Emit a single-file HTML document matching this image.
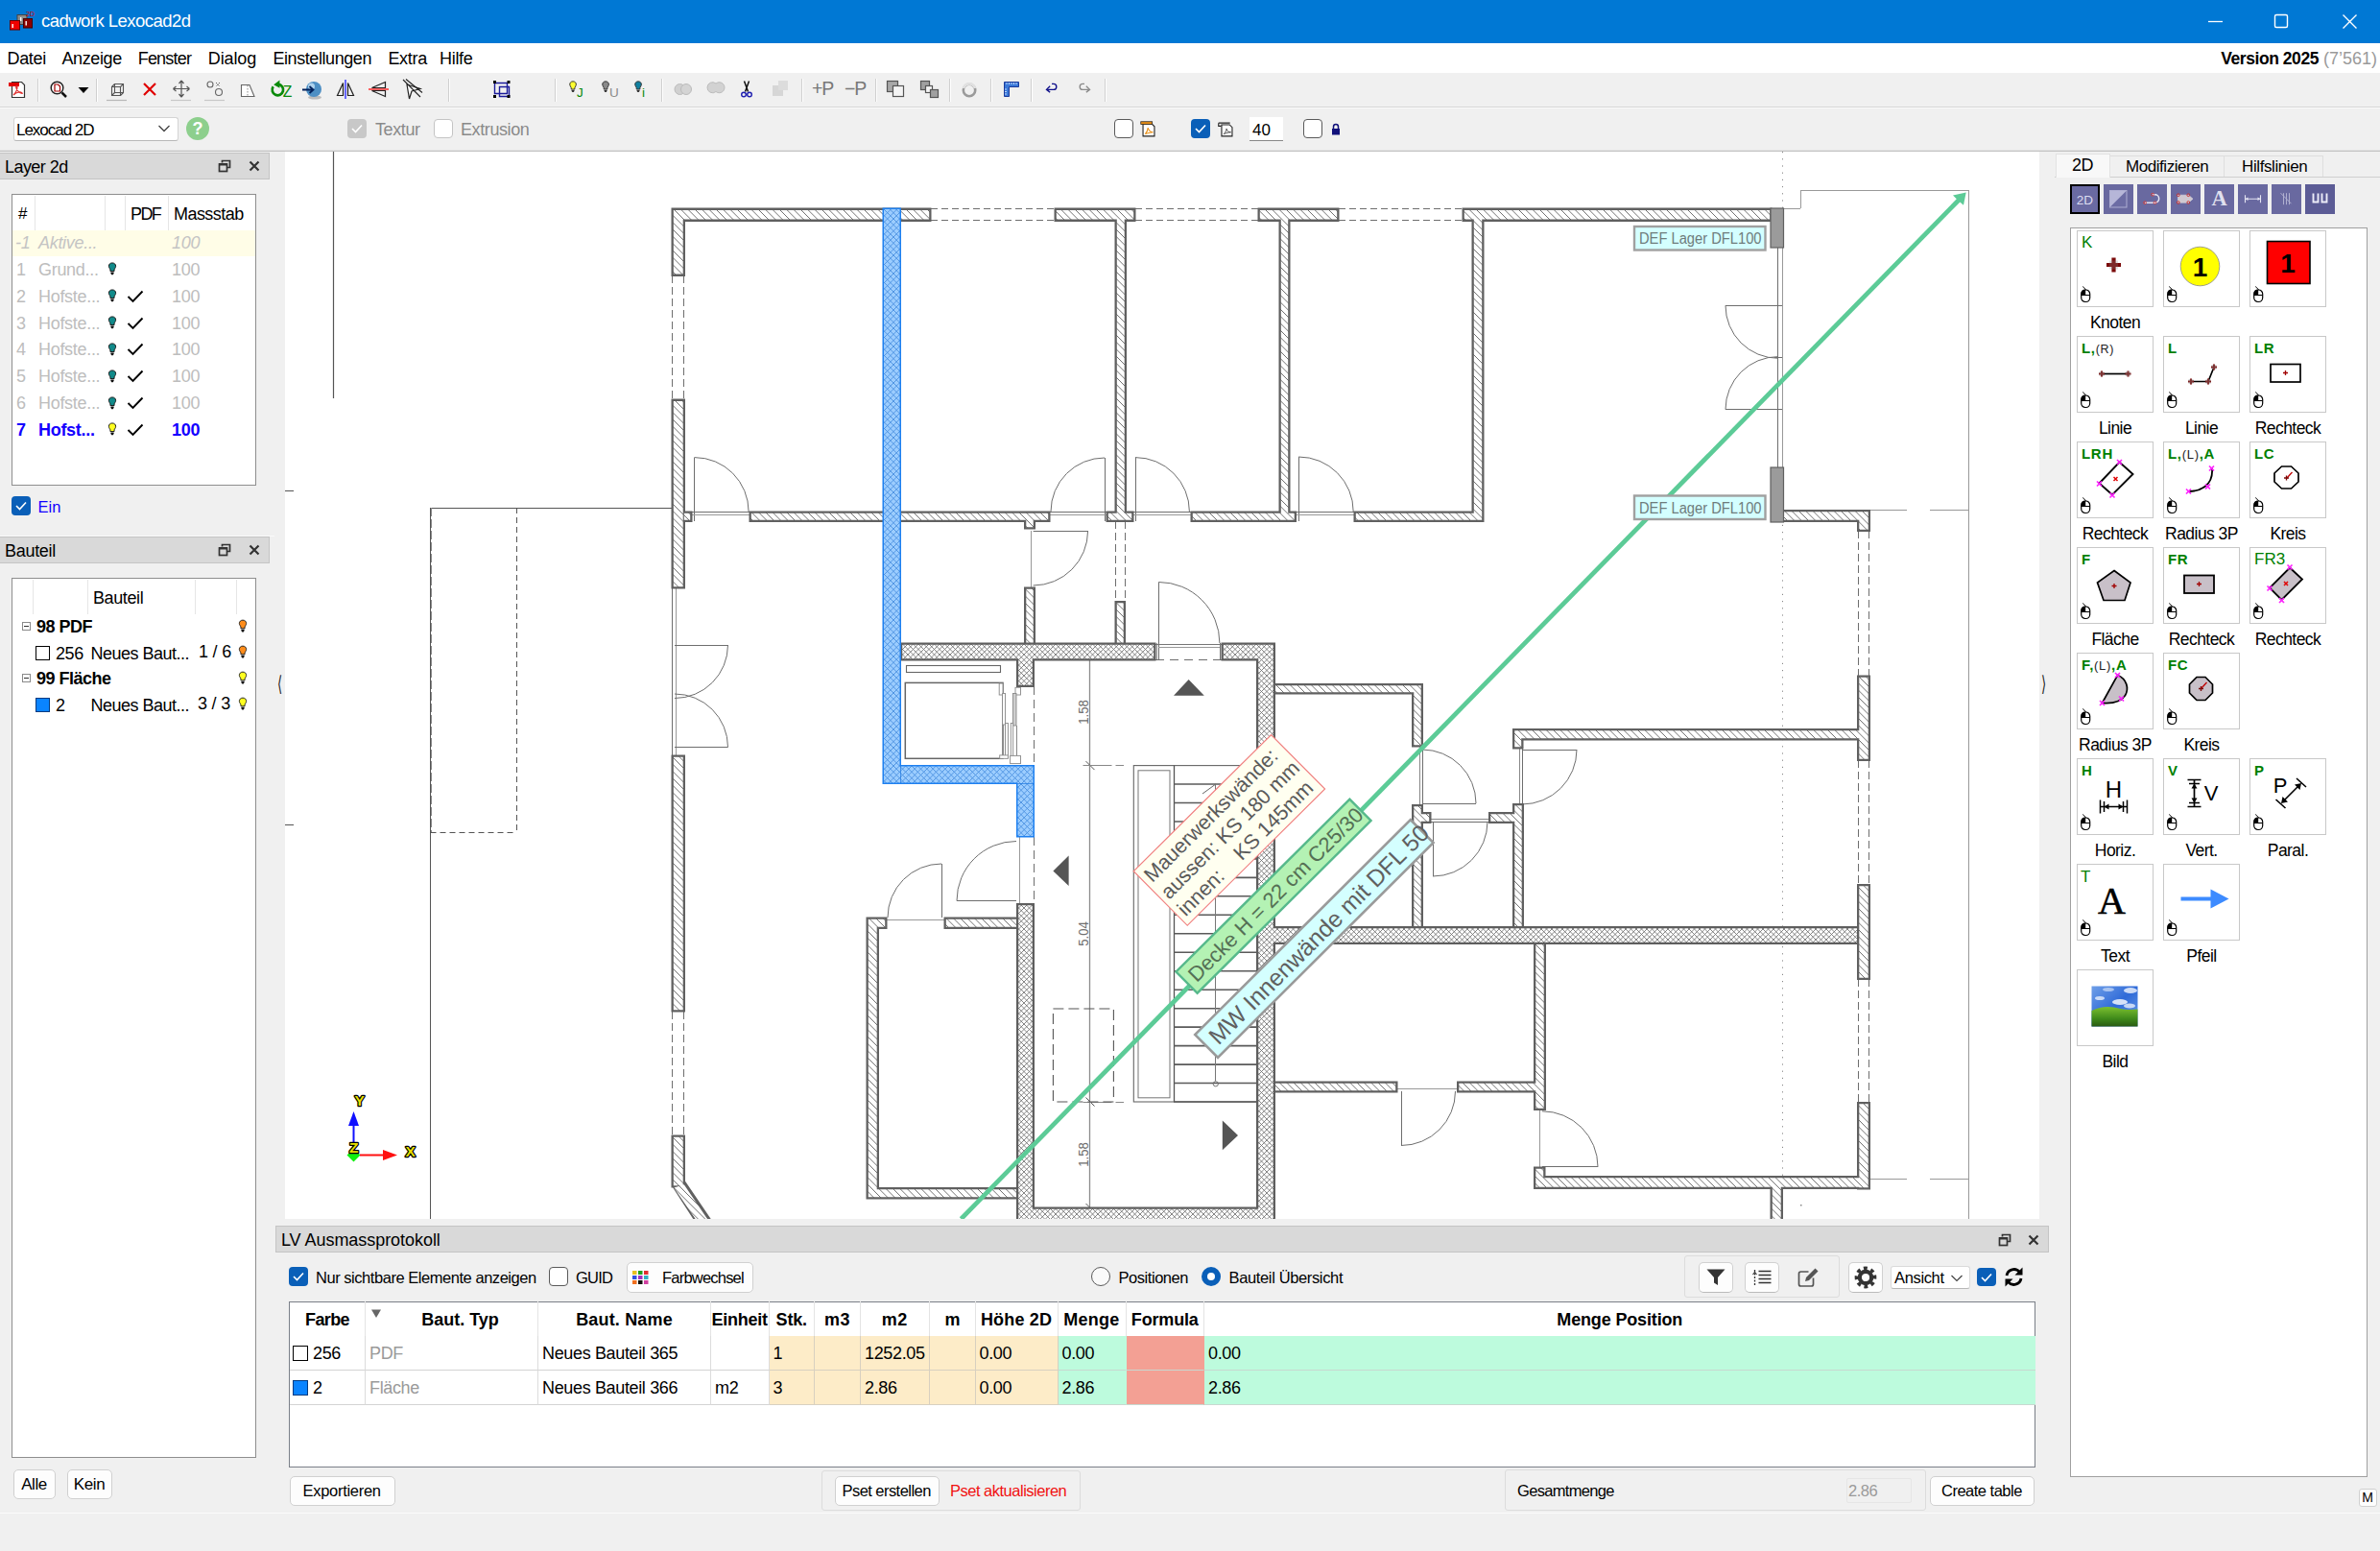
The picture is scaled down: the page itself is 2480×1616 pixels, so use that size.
<!DOCTYPE html>
<html lang="de">
<head>
<meta charset="utf-8">
<title>cadwork Lexocad2d</title>
<style>
*{box-sizing:border-box;margin:0;padding:0}
html,body{width:2480px;height:1616px;overflow:hidden;background:#f0f0f0}
body{font-family:"Liberation Sans",sans-serif;font-size:17.5px;color:#000;position:relative}
.abs{position:absolute}
.t{position:absolute;white-space:nowrap;line-height:1}
svg{position:absolute;overflow:visible}
#titlebar{left:0;top:0;width:2480px;height:45px;background:#0078d4}
#menubar{left:0;top:45px;width:2480px;height:31px;background:#fff}
.menu{position:absolute;top:51px;font-size:18px;line-height:20px;white-space:nowrap}
.tsep{position:absolute;top:82px;width:1px;height:24px;background:#d0d0d0;border-right:1px solid #fff;box-sizing:content-box}
.hline{position:absolute;left:0;width:2480px;height:1px}
.dock{position:absolute;background:#d9d9d9;border:1px solid #c4c4c4;height:27px}
.dock .t{top:5px;font-size:18px}
.box{position:absolute;background:#fff;border:1px solid #8e8e8e}
.cb{position:absolute;width:20px;height:20px;border-radius:4px}
.cb.on{background:#0a5fb8}
.cb.off{background:#fff;border:1px solid #5a5a5a}
.cb.dis{background:#c8c8c8}
.btn{position:absolute;background:#fdfdfd;border:1px solid #d0d0d0;border-radius:5px;text-align:center;white-space:nowrap}
.grp{position:absolute;border:1px solid #dcdcdc;border-radius:3px;background:#f0f0f0}
.lrow{position:absolute;left:13px;width:253px;height:26.500px}
.lrow .t{top:4px;font-size:18px}
.g{color:#bdbdbd}
.tile{position:absolute;width:80px;height:80px;border:1px solid #c8c8c8;background:#fff}
.tlab{position:absolute;width:110px;text-align:center;font-size:17.5px;line-height:20px;white-space:nowrap}
.key{position:absolute;font-weight:bold;color:#008000;font-size:15px;line-height:1;white-space:nowrap;font-family:"Liberation Sans",sans-serif}
.th{position:absolute;top:1356px;height:36px;font-weight:bold;font-size:18px;line-height:38px;text-align:center;white-space:nowrap;border-right:1px solid #e4e4e4}
.td{position:absolute;height:36px;font-size:18px;line-height:37px;white-space:nowrap;border-right:1px solid #dcdcdc;border-bottom:1px solid #d4d4d4;padding-left:4px}
</style>
</head>
<body>
<div id="titlebar" class="abs"></div>
<svg style="left:10px;top:11px" width="26" height="22" viewBox="0 0 26 22">
<rect x="8" y="4.5" width="10" height="10" fill="#8c8c8c" stroke="#444" stroke-width="1"/>
<rect x="14.5" y="8.5" width="9" height="9.5" fill="#8b0000" stroke="#400" stroke-width="1"/>
<rect x="0.5" y="10.5" width="10" height="9.5" fill="#f00000" stroke="#600" stroke-width="1"/>
<rect x="2.5" y="14" width="1.4" height="4" fill="#fff"/><rect x="11" y="7" width="1.4" height="4" fill="#fff"/><rect x="16.5" y="11" width="1.4" height="4.5" fill="#fff"/>
<text x="17" y="5.5" font-size="7" font-family="Liberation Sans, sans-serif" fill="#d00000">2D</text></svg>
<div class="t" style="left:43px;top:13px;font-size:18.500px;color:#fff;letter-spacing:-0.53px">cadwork Lexocad2d</div>
<svg style="left:2290px;top:8px" width="180" height="30" viewBox="2290 8 180 30">
<path d="M2301 22.5H2316" stroke="#fff" stroke-width="1.3" fill="none"/>
<rect x="2370.5" y="15.5" width="13" height="13" rx="1.5" fill="none" stroke="#fff" stroke-width="1.4"/>
<path d="M2441.5 15.5L2455.5 29.5M2455.5 15.5L2441.5 29.5" stroke="#fff" stroke-width="1.4" fill="none"/></svg>
<div id="menubar" class="abs"></div>
<div class="menu" style="left:7.5px;letter-spacing:-0.33px">Datei</div>
<div class="menu" style="left:64.4px;letter-spacing:-0.36px">Anzeige</div>
<div class="menu" style="left:143.7px;letter-spacing:-0.79px">Fenster</div>
<div class="menu" style="left:216.8px;letter-spacing:-0.13px">Dialog</div>
<div class="menu" style="left:284.4px;letter-spacing:-0.42px">Einstellungen</div>
<div class="menu" style="left:404.4px;letter-spacing:-0.3px">Extra</div>
<div class="menu" style="left:458px;letter-spacing:-0.3px">Hilfe</div>
<div class="t" style="right:3px;top:51px;font-size:18px;line-height:20px"><b style="font-size:17.5px;letter-spacing:-0.45px">Version 2025</b> <span style="color:#9a9a9a">(7’561)</span></div>
<div class="hline" style="top:111px;background:#d6d6d6"></div><div class="hline" style="top:112px;background:#fbfbfb"></div>
<div class="hline" style="top:156px;background:#e2e2e2"></div><div class="hline" style="top:157px;background:#c2c2c2"></div>
<div class="tsep" style="left:39px"></div>
<div class="tsep" style="left:100px"></div>
<div class="tsep" style="left:467px"></div>
<div class="tsep" style="left:578px"></div>
<div class="tsep" style="left:689px"></div>
<div class="tsep" style="left:835px"></div>
<div class="tsep" style="left:912px"></div>
<div class="tsep" style="left:989px"></div>
<div class="tsep" style="left:1032px"></div>
<div class="tsep" style="left:1074px"></div>
<div class="tsep" style="left:1151px"></div>
<svg style="left:7.0px;top:81.0px" width="24" height="24" viewBox="0 0 24 24"><path d="M5.5 4.5h10l3 3v13h-13z" fill="#fff" stroke="#333" stroke-width="1.2"/><rect x="2" y="5" width="11" height="4" fill="#e00000"/><path d="M7 18c2-2 4-6 4-8.5 0-1.2-1.5-1-1.300 0.300 0.500 3 3.500 6.500 6.300 6.700 1 0-0.500-1.800-3-1.500-2 0.200-4.500 1.200-6 3z" fill="none" stroke="#e03030" stroke-width="1.2"/></svg>
<svg style="left:49.0px;top:81.0px" width="24" height="24" viewBox="0 0 24 24"><circle cx="10.5" cy="10.5" r="6.3" fill="#fff" stroke="#222" stroke-width="1.5"/><path d="M15.500 15.500L20 20" stroke="#111" stroke-width="2.5"/><path d="M8 7h3.500l2 2v5H8z" fill="#fff" stroke="#a00000" stroke-width="1.2"/></svg>
<svg style="left:74.5px;top:81.0px" width="24" height="24" viewBox="0 0 24 24"><path d="M6.500 10h11L12 16z" fill="#000"/></svg>
<svg style="left:109.5px;top:81.0px" width="24" height="24" viewBox="0 0 24 24"><path d="M6.500 9.500h9v9h-9zM9.500 6.500h9v9h-9zM6.500 9.500l3-3M15.500 9.500l3-3M15.500 18.500l3-3M6.500 18.500l3-3" fill="none" stroke="#555" stroke-width="1.1"/><path d="M1 23.500h21" stroke="#b8b8b8" stroke-width="1.2"/></svg>
<svg style="left:143.5px;top:81.0px" width="24" height="24" viewBox="0 0 24 24"><path d="M6 6L18 18M18 6L6 18" stroke="#e00000" stroke-width="2.2" fill="none"/></svg>
<svg style="left:177.0px;top:81.0px" width="24" height="24" viewBox="0 0 24 24"><path d="M12 3v17M3.500 11.500h17M12 3l-2.500 3M12 3l2.500 3M12 20l-2.500-3M12 20l2.500-3M3.500 11.500l3-2.500M3.500 11.500l3 2.500M20.500 11.500l-3-2.500M20.500 11.500l-3 2.500" stroke="#555" stroke-width="1.2" fill="none"/><path d="M1 23.500h21" stroke="#c8c8c8" stroke-width="1.2"/></svg>
<svg style="left:212.0px;top:81.0px" width="24" height="24" viewBox="0 0 24 24"><circle cx="7" cy="7" r="3" fill="none" stroke="#666" stroke-width="1.1"/><circle cx="16" cy="15" r="3.500" fill="none" stroke="#666" stroke-width="1.1"/><path d="M13 5l4 4M17 5l-4 4" stroke="#666" stroke-width="1" stroke-dasharray="1.500 1"/><path d="M1 23.500h21" stroke="#c8c8c8" stroke-width="1.2"/></svg>
<svg style="left:246.0px;top:81.0px" width="24" height="24" viewBox="0 0 24 24"><path d="M5.500 7.500h8.500l5 12h-13.500z" fill="#fff" stroke="#666" stroke-width="1.1"/><path d="M12 8v11" stroke="#888" stroke-width="1" stroke-dasharray="1.500 1.500"/></svg>
<svg style="left:278.5px;top:80.0px" width="26" height="26" viewBox="0 0 24 24"><path d="M5.200 9.500A5.300 5.300 0 1 0 10 7.200" fill="none" stroke="#0a8a0a" stroke-width="2.500"/><path d="M11.500 3.200v7.600l-5.800-3.200z" fill="#0a8a0a"/><text x="14.500" y="19" font-size="14.500" font-family="Liberation Sans, sans-serif" fill="#0a8a0a">Z</text></svg>
<svg style="left:313.5px;top:81.0px" width="24" height="24" viewBox="0 0 24 24"><ellipse cx="14" cy="20.500" rx="7" ry="2" fill="#999" opacity="0.600"/><circle cx="13" cy="12" r="8" fill="#4d8fc4"/><circle cx="10.500" cy="9" r="3.500" fill="#b9d9f2" opacity="0.900"/><path d="M1 12.500h11M8.500 9l4 3.500-4 3.500" stroke="#00205a" stroke-width="1.800" fill="none"/></svg>
<svg style="left:347.5px;top:81.0px" width="24" height="24" viewBox="0 0 24 24"><path d="M9.500 5.500v13h-6zM14.500 5.500v13h6z" fill="none" stroke="#222" stroke-width="1.2"/><path d="M12 2v20" stroke="#2020ff" stroke-width="1.3"/></svg>
<svg style="left:382.0px;top:81.0px" width="24" height="24" viewBox="0 0 24 24"><path d="M19.500 4.500l-14 6h14zM19.500 19.500l-14-6h14z" fill="none" stroke="#222" stroke-width="1.2"/><path d="M2 12h21" stroke="#ff2020" stroke-width="1.4"/></svg>
<svg style="left:416.5px;top:81.0px" width="24" height="24" viewBox="0 0 24 24"><path d="M7 7l14 4.500-9 2.500-2.500 8z" fill="#fff" stroke="#222" stroke-width="1.2"/><path d="M3 2l18 18M6 1.500l17 14" stroke="#222" stroke-width="1.1"/></svg>
<svg style="left:510.5px;top:81.0px" width="24" height="24" viewBox="0 0 24 24"><path d="M4.500 5.500h13v11h-13zM9.500 9.500h10v10h-10z" fill="none" stroke="#1a1a9a" stroke-width="1.4"/><rect x="3" y="3" width="3" height="3" fill="#000"/><rect x="17.500" y="3" width="3" height="3" fill="#000"/><rect x="3" y="18" width="3" height="3" fill="#000"/><rect x="17.500" y="18" width="3" height="3" fill="#000"/></svg>
<svg style="left:587.5px;top:80.0px" width="24" height="24" viewBox="0 0 24 24"><g transform="translate(3.500,3) scale(0.74)"><path d="M7.500 2.500c-3 0-4.500 2.200-4.500 4.300 0 2 1.500 3 2 4.500v2.200h5v-2.200c0.500-1.500 2-2.500 2-4.500 0-2.100-1.500-4.300-4.500-4.300z" fill="#ffff30" stroke="#333" stroke-width="1.300"/><path d="M5.500 14.500h4v1.500l-1 1.500h-2l-1-1.500z" fill="#333"/></g><text x="13" y="20.500" font-size="13.500" font-family="Liberation Sans, sans-serif" fill="#0a8a0a">J</text></svg>
<svg style="left:621.5px;top:80.0px" width="24" height="24" viewBox="0 0 24 24"><g transform="translate(3.500,3) scale(0.74)"><path d="M7.500 2.500c-3 0-4.500 2.200-4.500 4.300 0 2 1.500 3 2 4.500v2.200h5v-2.200c0.500-1.500 2-2.500 2-4.500 0-2.100-1.500-4.300-4.500-4.300z" fill="#8a8a8a" stroke="#333" stroke-width="1.300"/><path d="M5.500 14.500h4v1.500l-1 1.500h-2l-1-1.500z" fill="#333"/></g><text x="13" y="20.500" font-size="13.500" font-family="Liberation Sans, sans-serif" fill="#8a8a8a">U</text></svg>
<svg style="left:655.5px;top:80.0px" width="24" height="24" viewBox="0 0 24 24"><g transform="translate(3.500,3) scale(0.74)"><path d="M7.500 2.500c-3 0-4.500 2.200-4.500 4.300 0 2 1.500 3 2 4.500v2.200h5v-2.200c0.500-1.500 2-2.500 2-4.500 0-2.100-1.500-4.300-4.500-4.300z" fill="#1080a0" stroke="#333" stroke-width="1.300"/><path d="M5.500 14.500h4v1.500l-1 1.500h-2l-1-1.500z" fill="#333"/></g><text x="13" y="20.500" font-size="13.500" font-family="Liberation Sans, sans-serif" fill="#0a8a0a">i</text></svg>
<svg style="left:699.5px;top:81.0px" width="24" height="24" viewBox="0 0 24 24"><circle cx="8.500" cy="12" r="5.500" fill="#d0d0d0" stroke="#bbb"/><circle cx="15" cy="12" r="5.500" fill="#d4d4d4" stroke="#bbb"/></svg>
<svg style="left:733.5px;top:81.0px" width="24" height="24" viewBox="0 0 24 24"><path d="M3 10a5.500 5.500 0 0 1 9-4 5.500 5.500 0 1 1 0 8.500A5.500 5.500 0 0 1 3 10z" fill="#d2d2d2" stroke="#bcbcbc"/></svg>
<svg style="left:766.0px;top:81.0px" width="24" height="24" viewBox="0 0 24 24"><path d="M9.500 3.500l4 11M14.500 3.500l-4 11" stroke="#111" stroke-width="1.5"/><circle cx="9" cy="17.500" r="2.300" fill="none" stroke="#2020b0" stroke-width="1.400"/><circle cx="15" cy="17.500" r="2.300" fill="none" stroke="#2020b0" stroke-width="1.400"/></svg>
<svg style="left:801.0px;top:81.0px" width="24" height="24" viewBox="0 0 24 24"><rect x="4" y="8" width="11" height="11" fill="#d6d6d6"/><rect x="10" y="3" width="10" height="10" fill="#dcdcdc"/></svg>
<div class="t" style="left:846px;top:83px;font-size:19.500px;color:#787878;letter-spacing:-1.2px">+P</div>
<div class="t" style="left:880px;top:83px;font-size:19.500px;color:#787878;letter-spacing:-1.2px">−P</div>
<svg style="left:921.0px;top:81.0px" width="24" height="24" viewBox="0 0 24 24"><rect x="3.500" y="3.500" width="11" height="11" fill="#a8a8a8" stroke="#555" stroke-width="1.2"/><rect x="9.500" y="8.500" width="11" height="11" fill="#f4f4f4" stroke="#555" stroke-width="1.2"/></svg>
<svg style="left:955.5px;top:81.0px" width="24" height="24" viewBox="0 0 24 24"><rect x="3.500" y="3.500" width="9" height="9" fill="#a0a0a0" stroke="#555" stroke-width="1.2"/><rect x="8.500" y="8.500" width="7" height="7" fill="#f4f4f4" stroke="#555" stroke-width="1.2"/><rect x="13.500" y="12.500" width="8" height="8" fill="#a0a0a0" stroke="#555" stroke-width="1.2"/></svg>
<svg style="left:998.0px;top:81.0px" width="24" height="24" viewBox="0 0 24 24"><circle cx="12" cy="13" r="6.200" fill="none" stroke="#9a9a9a" stroke-width="2.600"/><path d="M6 11a6.200 6.200 0 0 1 12 0" fill="none" stroke="#e0e0e0" stroke-width="2.800"/></svg>
<svg style="left:1042.0px;top:81.0px" width="24" height="24" viewBox="0 0 24 24"><path d="M4.500 4.500h15v5h-10v10h-5z" fill="#3a78d8" stroke="#1a3a9a" stroke-width="1"/><path d="M7 5v2M9.500 5v2M12 5v2M14.500 5v2M17 5v2M5 12h2M5 14.500h2M5 17h2" stroke="#cfe0ff" stroke-width="0.900"/></svg>
<svg style="left:1085.0px;top:81.0px" width="22" height="22" viewBox="0 0 24 24"><path d="M7 12.500h7a3.200 3.200 0 0 0 0-6.500h-2" fill="none" stroke="#10108a" stroke-width="1.500" transform="translate(0,1) scale(1,1)"/><path d="M10 9.500l-4 4 4 3" fill="none" stroke="#10108a" stroke-width="1.500" transform="translate(0,0)"/></svg>
<svg style="left:1119.0px;top:81.0px" width="22" height="22" viewBox="0 0 24 24"><path d="M17 12.500h-7a3.200 3.200 0 0 1 0-6.500h2" fill="none" stroke="#8a8a8a" stroke-width="1.500" transform="translate(0,1)"/><path d="M14 9.500l4 4-4 3" fill="none" stroke="#8a8a8a" stroke-width="1.500"/></svg>
<div class="abs" style="left:14px;top:122px;width:172px;height:25px;background:#fff;border:1px solid #d4d4d4;border-radius:3px;border-bottom-color:#b8b8b8"></div>
<div class="t" style="left:17px;top:126px;font-size:17px;line-height:20px;letter-spacing:-1.03px">Lexocad 2D</div>
<svg style="left:164px;top:129px" width="14" height="10" viewBox="0 0 14 10"><path d="M1.500 2l5.500 5.500L12.500 2" fill="none" stroke="#444" stroke-width="1.300"/></svg>
<div class="abs" style="left:194px;top:122px;width:24px;height:24px;border-radius:12px;background:#8dcf8d"></div><div class="t" style="left:200.500px;top:125px;font-size:18px;font-weight:bold;color:#fff">?</div>
<div class="cb dis" style="left:362px;top:124px"><svg style="left:4px;top:5px" width="12" height="10" viewBox="0 0 12 10"><path d="M1 5l3.500 3.500L11 1.500" fill="none" stroke="#fff" stroke-width="1.600"/></svg></div><div class="t" style="left:391px;top:126px;font-size:18px;color:#8a8a8a;letter-spacing:-0.4px">Textur</div>
<div class="cb off" style="left:452px;top:124px;border-color:#c4c4c4"></div><div class="t" style="left:480px;top:126px;font-size:18px;color:#8a8a8a;letter-spacing:-0.4px">Extrusion</div>
<div class="cb off" style="left:1160.500px;top:124px"></div>
<svg style="left:1186.0px;top:124.0px" width="22" height="22" viewBox="0 0 24 24"><path d="M5.500 5.500h10l3 3v11h-13z" fill="#fff" stroke="#222" stroke-width="1.200"/><rect x="3" y="3" width="13" height="3" fill="#e89018" stroke="#222" stroke-width="0.800"/><path d="M8 17c2-2 3-5 3-7 1 3 3 5 6 5-3 0-6 1-9 2z" fill="none" stroke="#e89018" stroke-width="1.200"/></svg>
<div class="cb on" style="left:1241px;top:124px"><svg style="left:4px;top:5px" width="12" height="10" viewBox="0 0 12 10"><path d="M1 5l3.500 3.500L11 1.500" fill="none" stroke="#fff" stroke-width="1.600"/></svg></div>
<svg style="left:1266.5px;top:124.0px" width="22" height="22" viewBox="0 0 24 24"><path d="M6.500 6.500h9l3 3v10h-12z" fill="#fff" stroke="#222" stroke-width="1.200"/><path d="M3 4.500h13M3 4.500v3.500h3" fill="none" stroke="#222" stroke-width="1.200"/><path d="M9 17c2-2 3-4 3-6 1 3 2 4 5 4-3 0-5 1-8 2z" fill="none" stroke="#444" stroke-width="1"/></svg>
<div class="abs" style="left:1302px;top:122px;width:35px;height:25px;background:#fff;border-bottom:1px solid #888"></div><div class="t" style="left:1305px;top:127px;font-size:17px">40</div>
<div class="cb off" style="left:1358px;top:124px"></div>
<svg style="left:1386px;top:128px" width="12" height="14" viewBox="0 0 12 14"><path d="M3.500 6v-2a2.500 2.500 0 0 1 5 0v2" fill="none" stroke="#10107a" stroke-width="1.500"/><rect x="2" y="6" width="8" height="6.500" fill="#10107a"/></svg>
<div class="dock" style="left:-1px;top:159px;width:282px;height:28px"><div class="t" style="left:5px;letter-spacing:-0.55px">Layer 2d</div></div>
<svg style="left:227px;top:166px" width="14" height="14" viewBox="0 0 14 14"><path d="M4.500 3.500v-2h8v7h-2.500" fill="none" stroke="#333" stroke-width="1.700"/><rect x="1.500" y="5" width="8" height="7.500" fill="none" stroke="#333" stroke-width="1.700"/><path d="M1 5.300h9" stroke="#333" stroke-width="2.400"/></svg><svg style="left:258.5px;top:167px" width="12" height="12" viewBox="0 0 12 12"><path d="M1.500 1.500l9 9M10.500 1.500l-9 9" stroke="#333" stroke-width="2.200" fill="none"/></svg>
<div class="box" style="left:12px;top:202px;width:255px;height:304px"></div>
<div class="abs" style="left:36px;top:204px;width:1px;height:36px;background:#e6e6e6"></div>
<div class="abs" style="left:109px;top:204px;width:1px;height:36px;background:#e6e6e6"></div>
<div class="abs" style="left:129.5px;top:204px;width:1px;height:36px;background:#e6e6e6"></div>
<div class="abs" style="left:174.5px;top:204px;width:1px;height:36px;background:#e6e6e6"></div>
<div class="t" style="left:19px;top:214px;font-size:17px">#</div>
<div class="t" style="left:136px;top:214px;font-size:18px;letter-spacing:-1.6px">PDF</div>
<div class="t" style="left:181px;top:214px;font-size:18px;letter-spacing:-0.55px">Massstab</div>
<div class="lrow" style="top:240.0px;background:#fffde7;color:#c4c4c4;font-style:italic;"><span class="t" style="left:3px;letter-spacing:-0.3px">-1</span><span class="t" style="left:27px;letter-spacing:-0.3px">Aktive...</span><span class="t" style="left:166px;letter-spacing:-0.2px">100</span></div>
<div class="lrow" style="top:267.8px;color:#bdbdbd;"><span class="t" style="left:4px;letter-spacing:-0.3px">1</span><span class="t" style="left:27px;letter-spacing:-0.3px">Grund...</span><svg style="left:99px;top:5.500px" width="10" height="14.500" viewBox="0 0 11 16"><path d="M5.500 1c-2.600 0-4 1.800-4 3.700 0 1.800 1.300 2.700 1.700 4v1.800h4.600v-1.800c0.400-1.300 1.700-2.200 1.700-4 0-1.900-1.400-3.700-4-3.700z" fill="#118a8a" stroke="#111" stroke-width="1"/><path d="M3.700 11.500h3.600v1.500l-0.900 1.500h-1.800l-0.900-1.500z" fill="#111"/></svg><span class="t" style="left:166px;letter-spacing:-0.2px">100</span></div>
<div class="lrow" style="top:295.7px;color:#bdbdbd;"><span class="t" style="left:4px;letter-spacing:-0.3px">2</span><span class="t" style="left:27px;letter-spacing:-0.3px">Hofste...</span><svg style="left:99px;top:5.500px" width="10" height="14.500" viewBox="0 0 11 16"><path d="M5.500 1c-2.600 0-4 1.800-4 3.700 0 1.800 1.300 2.700 1.700 4v1.800h4.600v-1.800c0.400-1.300 1.700-2.200 1.700-4 0-1.900-1.400-3.700-4-3.700z" fill="#118a8a" stroke="#111" stroke-width="1"/><path d="M3.700 11.500h3.600v1.500l-0.900 1.500h-1.800l-0.900-1.500z" fill="#111"/></svg><svg class="ck" style="left:118.500px;top:6px" width="18" height="14" viewBox="0 0 18 14"><path d="M1.500 7l5 5L16.500 1.500" fill="none" stroke="#000" stroke-width="1.900"/></svg><span class="t" style="left:166px;letter-spacing:-0.2px">100</span></div>
<div class="lrow" style="top:323.5px;color:#bdbdbd;"><span class="t" style="left:4px;letter-spacing:-0.3px">3</span><span class="t" style="left:27px;letter-spacing:-0.3px">Hofste...</span><svg style="left:99px;top:5.500px" width="10" height="14.500" viewBox="0 0 11 16"><path d="M5.500 1c-2.600 0-4 1.800-4 3.700 0 1.800 1.300 2.700 1.700 4v1.800h4.600v-1.800c0.400-1.300 1.700-2.200 1.700-4 0-1.900-1.400-3.700-4-3.700z" fill="#118a8a" stroke="#111" stroke-width="1"/><path d="M3.700 11.500h3.600v1.500l-0.900 1.500h-1.800l-0.900-1.500z" fill="#111"/></svg><svg class="ck" style="left:118.500px;top:6px" width="18" height="14" viewBox="0 0 18 14"><path d="M1.500 7l5 5L16.500 1.500" fill="none" stroke="#000" stroke-width="1.900"/></svg><span class="t" style="left:166px;letter-spacing:-0.2px">100</span></div>
<div class="lrow" style="top:351.3px;color:#bdbdbd;"><span class="t" style="left:4px;letter-spacing:-0.3px">4</span><span class="t" style="left:27px;letter-spacing:-0.3px">Hofste...</span><svg style="left:99px;top:5.500px" width="10" height="14.500" viewBox="0 0 11 16"><path d="M5.500 1c-2.600 0-4 1.800-4 3.700 0 1.800 1.300 2.700 1.700 4v1.800h4.600v-1.800c0.400-1.300 1.700-2.200 1.700-4 0-1.900-1.400-3.700-4-3.700z" fill="#118a8a" stroke="#111" stroke-width="1"/><path d="M3.700 11.500h3.600v1.500l-0.900 1.500h-1.800l-0.900-1.500z" fill="#111"/></svg><svg class="ck" style="left:118.500px;top:6px" width="18" height="14" viewBox="0 0 18 14"><path d="M1.500 7l5 5L16.500 1.500" fill="none" stroke="#000" stroke-width="1.900"/></svg><span class="t" style="left:166px;letter-spacing:-0.2px">100</span></div>
<div class="lrow" style="top:379.1px;color:#bdbdbd;"><span class="t" style="left:4px;letter-spacing:-0.3px">5</span><span class="t" style="left:27px;letter-spacing:-0.3px">Hofste...</span><svg style="left:99px;top:5.500px" width="10" height="14.500" viewBox="0 0 11 16"><path d="M5.500 1c-2.600 0-4 1.800-4 3.700 0 1.800 1.300 2.700 1.700 4v1.800h4.600v-1.800c0.400-1.300 1.700-2.200 1.700-4 0-1.900-1.400-3.700-4-3.700z" fill="#118a8a" stroke="#111" stroke-width="1"/><path d="M3.700 11.500h3.600v1.500l-0.900 1.500h-1.800l-0.900-1.500z" fill="#111"/></svg><svg class="ck" style="left:118.500px;top:6px" width="18" height="14" viewBox="0 0 18 14"><path d="M1.500 7l5 5L16.500 1.500" fill="none" stroke="#000" stroke-width="1.900"/></svg><span class="t" style="left:166px;letter-spacing:-0.2px">100</span></div>
<div class="lrow" style="top:407.0px;color:#bdbdbd;"><span class="t" style="left:4px;letter-spacing:-0.3px">6</span><span class="t" style="left:27px;letter-spacing:-0.3px">Hofste...</span><svg style="left:99px;top:5.500px" width="10" height="14.500" viewBox="0 0 11 16"><path d="M5.500 1c-2.600 0-4 1.800-4 3.700 0 1.800 1.300 2.700 1.700 4v1.800h4.600v-1.800c0.400-1.300 1.700-2.200 1.700-4 0-1.900-1.400-3.700-4-3.700z" fill="#118a8a" stroke="#111" stroke-width="1"/><path d="M3.700 11.500h3.600v1.500l-0.900 1.500h-1.800l-0.900-1.500z" fill="#111"/></svg><svg class="ck" style="left:118.500px;top:6px" width="18" height="14" viewBox="0 0 18 14"><path d="M1.500 7l5 5L16.500 1.500" fill="none" stroke="#000" stroke-width="1.900"/></svg><span class="t" style="left:166px;letter-spacing:-0.2px">100</span></div>
<div class="lrow" style="top:434.8px;color:#1400ff;font-weight:bold;"><span class="t" style="left:4px;letter-spacing:-0.3px">7</span><span class="t" style="left:27px;letter-spacing:-0.3px">Hofst...</span><svg style="left:99px;top:5.500px" width="10" height="14.500" viewBox="0 0 11 16"><path d="M5.500 1c-2.600 0-4 1.800-4 3.700 0 1.800 1.300 2.700 1.700 4v1.800h4.600v-1.800c0.400-1.300 1.700-2.200 1.700-4 0-1.900-1.400-3.700-4-3.700z" fill="#ffff20" stroke="#111" stroke-width="1"/><path d="M3.700 11.500h3.600v1.500l-0.900 1.500h-1.800l-0.900-1.500z" fill="#111"/></svg><svg class="ck" style="left:118.500px;top:6px" width="18" height="14" viewBox="0 0 18 14"><path d="M1.500 7l5 5L16.500 1.500" fill="none" stroke="#000" stroke-width="1.900"/></svg><span class="t" style="left:166px;letter-spacing:-0.2px">100</span></div>
<div class="cb on" style="left:12px;top:517px"><svg style="left:4px;top:5px" width="12" height="10" viewBox="0 0 12 10"><path d="M1 5l3.500 3.500L11 1.500" fill="none" stroke="#fff" stroke-width="1.600"/></svg></div><div class="t" style="left:39.500px;top:520px;font-size:16.500px;color:#1400ff">Ein</div>
<div class="hline" style="top:558px;width:286px;background:#fafafa"></div>
<div class="dock" style="left:-1px;top:559px;width:282px;height:28px"><div class="t" style="left:5px;letter-spacing:-0.3px">Bauteil</div></div>
<svg style="left:227px;top:566px" width="14" height="14" viewBox="0 0 14 14"><path d="M4.500 3.500v-2h8v7h-2.500" fill="none" stroke="#333" stroke-width="1.700"/><rect x="1.500" y="5" width="8" height="7.500" fill="none" stroke="#333" stroke-width="1.700"/><path d="M1 5.300h9" stroke="#333" stroke-width="2.400"/></svg><svg style="left:258.5px;top:567px" width="12" height="12" viewBox="0 0 12 12"><path d="M1.500 1.500l9 9M10.500 1.500l-9 9" stroke="#333" stroke-width="2.200" fill="none"/></svg>
<div class="box" style="left:12px;top:602px;width:255px;height:917px"></div>
<div class="abs" style="left:33.5px;top:604px;width:1px;height:36px;background:#e6e6e6"></div>
<div class="abs" style="left:90.5px;top:604px;width:1px;height:36px;background:#e6e6e6"></div>
<div class="abs" style="left:202.5px;top:604px;width:1px;height:36px;background:#e6e6e6"></div>
<div class="abs" style="left:245.5px;top:604px;width:1px;height:36px;background:#e6e6e6"></div>
<div class="t" style="left:97px;top:614px;font-size:18px;letter-spacing:-0.4px">Bauteil</div>
<div class="abs" style="left:23px;top:648px;width:9px;height:9px;border:1px solid #8a8a8a;background:#fff"></div><div class="abs" style="left:25px;top:652px;width:5px;height:1px;background:#333"></div><div class="t" style="left:38px;top:644px;font-size:18px;font-weight:bold;letter-spacing:-0.5px">98 PDF</div><svg style="left:248px;top:645px" width="10" height="15" viewBox="0 0 11 16"><path d="M5.500 1c-2.600 0-4 1.800-4 3.700 0 1.800 1.300 2.700 1.700 4v1.800h4.600v-1.800c0.400-1.300 1.700-2.200 1.700-4 0-1.900-1.400-3.700-4-3.700z" fill="#ff8c1a" stroke="#111" stroke-width="1"/><path d="M3.700 11.500h3.600v1.500l-0.900 1.500h-1.800l-0.900-1.500z" fill="#111"/></svg>
<div class="abs" style="left:37px;top:673px;width:15px;height:15px;border:1px solid #000;background:#fff"></div><div class="t" style="left:58px;top:672px;font-size:18px;letter-spacing:-0.4px">256</div><div class="t" style="left:94.500px;top:672px;font-size:18px;letter-spacing:-0.5px">Neues Baut...</div><div class="t" style="left:207px;top:670px;font-size:18px;letter-spacing:-0.2px">1 / 6</div><svg style="left:248px;top:672px" width="10" height="15" viewBox="0 0 11 16"><path d="M5.500 1c-2.600 0-4 1.800-4 3.700 0 1.800 1.300 2.700 1.700 4v1.800h4.600v-1.800c0.400-1.300 1.700-2.200 1.700-4 0-1.900-1.400-3.700-4-3.700z" fill="#ff8c1a" stroke="#111" stroke-width="1"/><path d="M3.700 11.500h3.600v1.500l-0.900 1.500h-1.800l-0.900-1.500z" fill="#111"/></svg>
<div class="abs" style="left:23px;top:702px;width:9px;height:9px;border:1px solid #8a8a8a;background:#fff"></div><div class="abs" style="left:25px;top:706px;width:5px;height:1px;background:#333"></div><div class="t" style="left:38px;top:698px;font-size:18px;font-weight:bold;letter-spacing:-0.5px">99 Fläche</div><svg style="left:248px;top:699px" width="10" height="15" viewBox="0 0 11 16"><path d="M5.500 1c-2.600 0-4 1.800-4 3.700 0 1.800 1.300 2.700 1.700 4v1.800h4.600v-1.800c0.400-1.300 1.700-2.200 1.700-4 0-1.900-1.400-3.700-4-3.700z" fill="#ffff20" stroke="#111" stroke-width="1"/><path d="M3.700 11.500h3.600v1.500l-0.900 1.500h-1.800l-0.900-1.500z" fill="#111"/></svg>
<div class="abs" style="left:37px;top:727px;width:15px;height:15px;border:1px solid #003a80;background:#0a84ff"></div><div class="t" style="left:58px;top:726px;font-size:18px">2</div><div class="t" style="left:94.500px;top:726px;font-size:18px;letter-spacing:-0.5px">Neues Baut...</div><div class="t" style="left:206px;top:724px;font-size:18px;letter-spacing:-0.2px">3 / 3</div><svg style="left:248px;top:726px" width="10" height="15" viewBox="0 0 11 16"><path d="M5.500 1c-2.600 0-4 1.800-4 3.700 0 1.800 1.300 2.700 1.700 4v1.800h4.600v-1.800c0.400-1.300 1.700-2.200 1.700-4 0-1.900-1.400-3.700-4-3.700z" fill="#ffff20" stroke="#111" stroke-width="1"/><path d="M3.700 11.500h3.600v1.500l-0.900 1.500h-1.800l-0.900-1.500z" fill="#111"/></svg>
<div class="btn" style="left:13.500px;top:1530.500px;width:44px;height:31px;font-size:17px;line-height:29px;letter-spacing:-0.4px">Alle</div>
<div class="btn" style="left:69.500px;top:1530.500px;width:47px;height:31px;font-size:17px;line-height:29px;letter-spacing:-0.4px">Kein</div>
<div class="hline" style="top:1576px;background:#fbfbfb"></div>
<div class="t" style="left:289px;top:702px;font-size:22px;color:#222;transform:scaleX(0.600);transform-origin:left">⟨</div>
<div class="t" style="left:2127px;top:702px;font-size:22px;color:#222;transform:scaleX(0.600);transform-origin:left">⟩</div>
<div class="abs" style="left:297px;top:158px;width:1828px;height:1112px;background:#fff;overflow:hidden">
<svg style="left:0;top:0;overflow:hidden" width="1828" height="1112" viewBox="297 158 1828 1112" font-family="Liberation Sans, sans-serif">
<defs><pattern id="ph" width="22" height="22" patternUnits="userSpaceOnUse"><rect width="22" height="22" fill="#fff"/><path d="M-2 -31.33L24 -5.33M-2 -24.00L24 2.00M-2 -16.67L24 9.33M-2 -9.33L24 16.67M-2 -2.00L24 24.00M-2 5.33L24 31.33M-2 12.67L24 38.67M-2 20.00L24 46.00M-2 27.33L24 53.33" stroke="#6a6a6a" stroke-width="0.95" fill="none"/></pattern><pattern id="pc" width="11" height="11" patternUnits="userSpaceOnUse"><rect width="11" height="11" fill="#fff"/><path d="M-2 -18.50L13 -3.50M-2 -3.50L13 -18.50M-2 -13.00L13 2.00M-2 2.00L13 -13.00M-2 -7.50L13 7.50M-2 7.50L13 -7.50M-2 -2.00L13 13.00M-2 13.00L13 -2.00M-2 3.50L13 18.50M-2 18.50L13 3.50M-2 9.00L13 24.00M-2 24.00L13 9.00M-2 14.50L13 29.50M-2 29.50L13 14.50" stroke="#707070" stroke-width="0.85" fill="none"/></pattern><pattern id="pb" width="19" height="19" patternUnits="userSpaceOnUse"><rect width="19" height="19" fill="#9ccdff"/><path d="M-2 -27.33L21 -4.33M-2 -4.33L21 -27.33M-2 -21.00L21 2.00M-2 2.00L21 -21.00M-2 -14.67L21 8.33M-2 8.33L21 -14.67M-2 -8.33L21 14.67M-2 14.67L21 -8.33M-2 -2.00L21 21.00M-2 21.00L21 -2.00M-2 4.33L21 27.33M-2 27.33L21 4.33M-2 10.67L21 33.67M-2 33.67L21 10.67M-2 17.00L21 40.00M-2 40.00L21 17.00M-2 23.33L21 46.33M-2 46.33L21 23.33" stroke="#4a90e0" stroke-width="0.9" fill="none"/></pattern></defs>
<path d="M347.5 158L347.5 415" stroke="#555" stroke-width="1.2" fill="none"/><path d="M297 511.5L306 511.5" stroke="#555" stroke-width="1" fill="none"/><path d="M297 859.5L306 859.5" stroke="#555" stroke-width="1" fill="none"/><path d="M448.5 529.5L700 529.5" stroke="#555" stroke-width="1" fill="none"/><path d="M448.5 529L448.5 1270" stroke="#555" stroke-width="1" fill="none"/><path d="M538.5 529L538.5 867" stroke="#555" stroke-width="1" fill="none" stroke-dasharray="6 4"/><path d="M448.5 867.5L538.5 867.5" stroke="#555" stroke-width="1" fill="none" stroke-dasharray="6 4"/><path d="M449.5 529L449.5 867" stroke="#888" stroke-width="1" fill="none" stroke-dasharray="9 3"/><path d="M1857.5 158L1857.5 1270" stroke="#888" stroke-width="1" fill="none" stroke-dasharray="1.2 6"/><path d="M2051.5 198L2051.5 1270" stroke="#999" stroke-width="1" fill="none"/><path d="M1876 198.5L2051 198.5" stroke="#999" stroke-width="1" fill="none"/><path d="M1876.5 198L1876.5 217" stroke="#999" stroke-width="1" fill="none"/><path d="M1858 217.5L1876 217.5" stroke="#999" stroke-width="1" fill="none"/><path d="M1948 531.5L1987 531.5" stroke="#999" stroke-width="1" fill="none"/><path d="M2011 531.5L2051 531.5" stroke="#999" stroke-width="1" fill="none"/><path d="M1948 1228.5L1987 1228.5" stroke="#999" stroke-width="1" fill="none"/><path d="M2011 1228.5L2051 1228.5" stroke="#999" stroke-width="1" fill="none"/><path d="M970 217.5L1099 217.5" stroke="#6e6e6e" stroke-width="1" fill="none" stroke-dasharray="7 4"/><path d="M1183 217.5L1311 217.5" stroke="#6e6e6e" stroke-width="1" fill="none" stroke-dasharray="7 4"/><path d="M1395 217.5L1524 217.5" stroke="#6e6e6e" stroke-width="1" fill="none" stroke-dasharray="7 4"/><path d="M970 229.5L1099 229.5" stroke="#6e6e6e" stroke-width="1" fill="none" stroke-dasharray="7 4"/><path d="M1183 229.5L1311 229.5" stroke="#6e6e6e" stroke-width="1" fill="none" stroke-dasharray="7 4"/><path d="M1395 229.5L1524 229.5" stroke="#6e6e6e" stroke-width="1" fill="none" stroke-dasharray="7 4"/><path d="M700.5 287L700.5 416" stroke="#6e6e6e" stroke-width="1" fill="none" stroke-dasharray="8 4"/><path d="M700.5 1054L700.5 1183" stroke="#6e6e6e" stroke-width="1" fill="none" stroke-dasharray="8 4"/><path d="M712.5 287L712.5 416" stroke="#6e6e6e" stroke-width="1" fill="none" stroke-dasharray="8 4"/><path d="M712.5 1054L712.5 1183" stroke="#6e6e6e" stroke-width="1" fill="none" stroke-dasharray="8 4"/><path d="M1936.5 553L1936.5 704" stroke="#6e6e6e" stroke-width="1" fill="none" stroke-dasharray="8 4"/><path d="M1936.5 792L1936.5 922" stroke="#6e6e6e" stroke-width="1" fill="none" stroke-dasharray="8 4"/><path d="M1936.5 1020L1936.5 1149" stroke="#6e6e6e" stroke-width="1" fill="none" stroke-dasharray="8 4"/><path d="M1947.5 553L1947.5 704" stroke="#6e6e6e" stroke-width="1" fill="none" stroke-dasharray="8 4"/><path d="M1947.5 792L1947.5 922" stroke="#6e6e6e" stroke-width="1" fill="none" stroke-dasharray="8 4"/><path d="M1947.5 1020L1947.5 1149" stroke="#6e6e6e" stroke-width="1" fill="none" stroke-dasharray="8 4"/><path d="M1162.5 543L1162.5 627" stroke="#6e6e6e" stroke-width="1" fill="none" stroke-dasharray="8 4"/><path d="M1172.5 543L1172.5 627" stroke="#6e6e6e" stroke-width="1" fill="none" stroke-dasharray="8 4"/><path d="M723.5 533L723.5 476.6" stroke="#6e6e6e" stroke-width="1" fill="none"/><path d="M723.7 476.6A56.4 56.4 0 0 1 780.1 533.0" stroke="#6e6e6e" stroke-width="1" fill="none"/><path d="M723.5 533L723.5 543" stroke="#6e6e6e" stroke-width="1" fill="none"/><path d="M713 533.5L781 533.5" stroke="#6e6e6e" stroke-width="1" fill="none"/><path d="M713 536.5L781 536.5" stroke="#999" stroke-width="1" fill="none"/><path d="M1151.5 533L1151.5 477.0" stroke="#6e6e6e" stroke-width="1" fill="none"/><path d="M1151.0 477.0A56 56 0 0 0 1095.0 533.0" stroke="#6e6e6e" stroke-width="1" fill="none"/><path d="M1151.5 533L1151.5 543" stroke="#6e6e6e" stroke-width="1" fill="none"/><path d="M1094 533.5L1153 533.5" stroke="#6e6e6e" stroke-width="1" fill="none"/><path d="M1094 536.5L1153 536.5" stroke="#999" stroke-width="1" fill="none"/><path d="M1183.5 533L1183.5 476.6" stroke="#6e6e6e" stroke-width="1" fill="none"/><path d="M1183.0 476.6A56.4 56.4 0 0 1 1239.4 533.0" stroke="#6e6e6e" stroke-width="1" fill="none"/><path d="M1183.5 533L1183.5 543" stroke="#6e6e6e" stroke-width="1" fill="none"/><path d="M1181 533.5L1241 533.5" stroke="#6e6e6e" stroke-width="1" fill="none"/><path d="M1181 536.5L1241 536.5" stroke="#999" stroke-width="1" fill="none"/><path d="M1353.5 533L1353.5 476.0" stroke="#6e6e6e" stroke-width="1" fill="none"/><path d="M1353.2 476.0A57 57 0 0 1 1410.2 533.0" stroke="#6e6e6e" stroke-width="1" fill="none"/><path d="M1353.5 533L1353.5 543" stroke="#6e6e6e" stroke-width="1" fill="none"/><path d="M1350 533.5L1411 533.5" stroke="#6e6e6e" stroke-width="1" fill="none"/><path d="M1350 536.5L1411 536.5" stroke="#999" stroke-width="1" fill="none"/><path d="M1076.6 553.5L1133.6 553.5" stroke="#6e6e6e" stroke-width="1" fill="none"/><path d="M1133.6 553.0A57 57 0 0 1 1076.6 610.0" stroke="#6e6e6e" stroke-width="1" fill="none"/><path d="M1074.5 553L1074.5 612" stroke="#999" stroke-width="1" fill="none"/><path d="M1207.5 670L1207.5 606.5" stroke="#6e6e6e" stroke-width="1" fill="none"/><path d="M1207.4 606.5A63.5 63.5 0 0 1 1270.9 670.0" stroke="#6e6e6e" stroke-width="1" fill="none"/><path d="M1207.5 670L1207.5 688" stroke="#6e6e6e" stroke-width="1" fill="none"/><path d="M1271.5 670L1271.5 688" stroke="#6e6e6e" stroke-width="1" fill="none"/><path d="M1273.5 670L1273.5 688" stroke="#999" stroke-width="1" fill="none"/><path d="M1205.5 670L1205.5 688" stroke="#999" stroke-width="1" fill="none"/><path d="M1204 671.5L1273 671.5" stroke="#777" stroke-width="1" fill="none"/><path d="M1207 674.5L1271 674.5" stroke="#999" stroke-width="1" fill="none"/><path d="M1204 687.5L1273 687.5" stroke="#6e6e6e" stroke-width="1" fill="none" stroke-dasharray="9 6"/><path d="M700.5 613L700.5 787" stroke="#6e6e6e" stroke-width="1" fill="none"/><path d="M704.5 613L704.5 787" stroke="#999" stroke-width="1" fill="none"/><path d="M703 672.5L758.5 672.5" stroke="#6e6e6e" stroke-width="1" fill="none"/><path d="M758.5 672.0A55.5 55.5 0 0 1 703.0 727.5" stroke="#6e6e6e" stroke-width="1" fill="none"/><path d="M703 778.5L758.5 778.5" stroke="#6e6e6e" stroke-width="1" fill="none"/><path d="M758.5 778.5A55.5 55.5 0 0 0 703.0 723.0" stroke="#6e6e6e" stroke-width="1" fill="none"/><path d="M981.5 956L981.5 900.0" stroke="#6e6e6e" stroke-width="1" fill="none"/><path d="M981.0 900.0A56 56 0 0 0 925.0 956.0" stroke="#6e6e6e" stroke-width="1" fill="none"/><path d="M924 958.5L984 958.5" stroke="#999" stroke-width="1" fill="none"/><path d="M1059 938.5L997.0 938.5" stroke="#6e6e6e" stroke-width="1" fill="none"/><path d="M997.0 938.5A62 62 0 0 1 1059.0 876.5" stroke="#6e6e6e" stroke-width="1" fill="none"/><path d="M1062.5 872L1062.5 941" stroke="#999" stroke-width="1" fill="none"/><path d="M1077.5 715L1077.5 797" stroke="#6e6e6e" stroke-width="1" fill="none" stroke-dasharray="9 5"/><path d="M1077.5 872L1077.5 941" stroke="#6e6e6e" stroke-width="1" fill="none" stroke-dasharray="9 5"/><path d="M1852.5 258L1852.5 487" stroke="#6e6e6e" stroke-width="1" fill="none"/><path d="M1857.5 258L1857.5 487" stroke="#999" stroke-width="1" fill="none"/><path d="M1853 318.5L1798.0 318.5" stroke="#6e6e6e" stroke-width="1" fill="none"/><path d="M1798.0 318.3A55 55 0 0 0 1853.0 373.3" stroke="#6e6e6e" stroke-width="1" fill="none"/><path d="M1853 426.5L1798.0 426.5" stroke="#6e6e6e" stroke-width="1" fill="none"/><path d="M1798.0 426.6A55 55 0 0 1 1853.0 371.6" stroke="#6e6e6e" stroke-width="1" fill="none"/><path d="M1849 318.5L1857 318.5" stroke="#6e6e6e" stroke-width="1" fill="none"/><path d="M1849 372.5L1857 372.5" stroke="#6e6e6e" stroke-width="1" fill="none"/><path d="M1849 426.5L1857 426.5" stroke="#6e6e6e" stroke-width="1" fill="none"/><path d="M1482 837.5L1538.0 837.5" stroke="#6e6e6e" stroke-width="1" fill="none"/><path d="M1538.0 837.0A56 56 0 0 0 1482.0 781.0" stroke="#6e6e6e" stroke-width="1" fill="none"/><path d="M1482.5 778L1482.5 838" stroke="#6e6e6e" stroke-width="1" fill="none"/><path d="M1479.5 778L1479.5 838" stroke="#888" stroke-width="1" fill="none"/><path d="M1493.5 856L1493.5 913.0" stroke="#6e6e6e" stroke-width="1" fill="none"/><path d="M1493.0 913.0A57 57 0 0 0 1550.0 856.0" stroke="#6e6e6e" stroke-width="1" fill="none"/><path d="M1491 856.5L1551 856.5" stroke="#6e6e6e" stroke-width="1" fill="none"/><path d="M1491 853.5L1551 853.5" stroke="#888" stroke-width="1" fill="none"/><path d="M1586 781.5L1643.0 781.5" stroke="#6e6e6e" stroke-width="1" fill="none"/><path d="M1643.0 781.0A57 57 0 0 1 1586.0 838.0" stroke="#6e6e6e" stroke-width="1" fill="none"/><path d="M1586.5 780L1586.5 838" stroke="#6e6e6e" stroke-width="1" fill="none"/><path d="M1583.5 780L1583.5 838" stroke="#888" stroke-width="1" fill="none"/><path d="M1460.5 1137L1460.5 1193.5" stroke="#6e6e6e" stroke-width="1" fill="none"/><path d="M1460.0 1193.5A56.5 56.5 0 0 0 1516.5 1137.0" stroke="#6e6e6e" stroke-width="1" fill="none"/><path d="M1456 1134.5L1518.5 1134.5" stroke="#999" stroke-width="1" fill="none"/><path d="M1607 1215.5L1665.0 1215.5" stroke="#6e6e6e" stroke-width="1" fill="none"/><path d="M1665.0 1215.8A58 58 0 0 0 1607.0 1157.8" stroke="#6e6e6e" stroke-width="1" fill="none"/><path d="M1604.5 1156L1604.5 1216" stroke="#999" stroke-width="1" fill="none"/><rect x="943.3" y="711.4" width="101.700" height="78.900" fill="none" stroke="#666" stroke-width="1.5"/><rect x="944.5" y="693.5" width="98" height="7" fill="none" stroke="#666" stroke-width="1.1"/><rect x="1041.2" y="712" width="3.8" height="12.0" fill="#fff" stroke="#888" stroke-width="0.9"/><rect x="1044.6" y="722.5" width="2.9" height="32.5" fill="#fff" stroke="#888" stroke-width="0.9"/><rect x="1047.5" y="753.5" width="2.9" height="36.3" fill="#fff" stroke="#888" stroke-width="0.9"/><rect x="1041.7" y="786.9" width="8.7" height="3.4" fill="#fff" stroke="#888" stroke-width="0.9"/><rect x="1058" y="716.3" width="5.5" height="7.7" fill="#fff" stroke="#888" stroke-width="0.9"/><rect x="1055.5" y="722.5" width="3.5" height="33.5" fill="#cfcfcf" stroke="#888" stroke-width="0.9"/><rect x="1053.3" y="753.5" width="2.4" height="34.8" fill="#fff" stroke="#888" stroke-width="0.9"/><path d="M1059.5 756L1059.5 787.4" stroke="#888" stroke-width="1" fill="none"/><rect x="1052.6" y="787.4" width="10.9" height="8.2" fill="#fff" stroke="#888" stroke-width="0.9"/><path d="M1135.5 680L1135.5 1270" stroke="#8c8c8c" stroke-width="1.3" fill="none"/><path d="M1131.5 678.5L1140.5 687.5" stroke="#555" stroke-width="1" fill="none"/><path d="M1131.5 793.1L1140.5 802.1" stroke="#555" stroke-width="1" fill="none"/><path d="M1131.5 1143.5L1140.5 1152.5" stroke="#555" stroke-width="1" fill="none"/><path d="M1131.5 1254.0L1140.5 1263.0" stroke="#555" stroke-width="1" fill="none"/><path d="M1128.5 797.5L1171 797.5" stroke="#888" stroke-width="1" fill="none" stroke-dasharray="30 4"/><path d="M1128.5 1148.5L1171 1148.5" stroke="#888" stroke-width="1" fill="none" stroke-dasharray="30 4"/><rect x="1181.3" y="797.6" width="128.200" height="350.400" fill="none" stroke="#666" stroke-width="1.1"/><rect x="1186" y="802.8" width="33" height="341" fill="none" stroke="#777" stroke-width="1"/><path d="M1223.5 797.6L1223.5 1148" stroke="#555" stroke-width="1.3" fill="none"/><path d="M1223 1148.0L1309.5 1148.0" stroke="#5a5a5a" stroke-width="1.6" fill="none"/><path d="M1223 1128.5L1309.5 1128.5" stroke="#5a5a5a" stroke-width="1.6" fill="none"/><path d="M1223 1109.1L1309.5 1109.1" stroke="#5a5a5a" stroke-width="1.6" fill="none"/><path d="M1223 1089.6L1309.5 1089.6" stroke="#5a5a5a" stroke-width="1.6" fill="none"/><path d="M1223 1070.1L1309.5 1070.1" stroke="#5a5a5a" stroke-width="1.6" fill="none"/><path d="M1223 1050.7L1309.5 1050.7" stroke="#5a5a5a" stroke-width="1.6" fill="none"/><path d="M1223 1031.2L1309.5 1031.2" stroke="#5a5a5a" stroke-width="1.6" fill="none"/><path d="M1223 1011.7L1309.5 1011.7" stroke="#5a5a5a" stroke-width="1.6" fill="none"/><path d="M1223 992.2L1309.5 992.2" stroke="#5a5a5a" stroke-width="1.6" fill="none"/><path d="M1223 972.8L1309.5 972.8" stroke="#5a5a5a" stroke-width="1.6" fill="none"/><path d="M1223 953.3L1309.5 953.3" stroke="#5a5a5a" stroke-width="1.6" fill="none"/><path d="M1223 933.8L1309.5 933.8" stroke="#5a5a5a" stroke-width="1.6" fill="none"/><path d="M1223 914.4L1309.5 914.4" stroke="#5a5a5a" stroke-width="1.6" fill="none"/><path d="M1223 894.9L1309.5 894.9" stroke="#5a5a5a" stroke-width="1.6" fill="none"/><path d="M1223 875.4L1309.5 875.4" stroke="#5a5a5a" stroke-width="1.6" fill="none"/><path d="M1223 856.0L1309.5 856.0" stroke="#5a5a5a" stroke-width="1.6" fill="none"/><path d="M1223 836.5L1309.5 836.5" stroke="#5a5a5a" stroke-width="1.6" fill="none"/><path d="M1223 817.0L1309.5 817.0" stroke="#5a5a5a" stroke-width="1.6" fill="none"/><path d="M1266.5 818L1266.5 1126.5" stroke="#777" stroke-width="1" fill="none"/><path d="M1253 827L1266.8 817" stroke="#666" stroke-width="1" fill="none"/><circle cx="1266.8" cy="1129.3" r="2.600" fill="none" stroke="#666" stroke-width="0.9"/><rect x="1097.4" y="1051" width="63" height="97" fill="none" stroke="#555" stroke-width="1.1" stroke-dasharray="11 5"/>
<path d="M699.5 216.6H970.5V230.9H699.5ZM1098.5 216.6H1183.5V230.9H1098.5ZM1310.5 216.6H1395.5V230.9H1310.5ZM1523.5 216.6H1846.5V230.9H1523.5ZM699.5 216.6H714.0V287.9H699.5ZM699.5 415.6H714.0V613.5H699.5ZM699.5 786.5H714.0V1054.5H699.5ZM699.5 1182.5H714.0V1237.5H699.5ZM1161.5 216.6H1174.0V544.0H1161.5ZM1332.5 216.6H1344.5V544.0H1332.5ZM1533.5 216.6H1546.5V544.0H1533.5ZM780.5 532.5H1094.5V544.0H780.5ZM1067.0 532.5H1079.0V551.5H1067.0ZM710.5 532.5H721.5V544.0H710.5ZM1152.5 532.5H1181.5V544.0H1152.5ZM1240.5 532.5H1351.0V544.0H1240.5ZM1410.5 532.5H1546.5V544.0H1410.5ZM1067.0 611.5H1079.0V672.5H1067.0ZM1161.5 626.0H1173.0V672.5H1161.5ZM1856.5 531.0H1949.0V544.0H1856.5ZM1935.0 531.0H1949.0V554.0H1935.0ZM1935.0 703.5H1949.0V793.0H1935.0ZM1935.0 921.0H1949.0V1021.0H1935.0ZM1935.0 1148.0H1949.0V1239.5H1935.0ZM1576.0 759.0H1949.0V771.5H1576.0ZM1576.0 759.0H1587.5V780.5H1576.0ZM1576.0 837.0H1588.0V970.5H1576.0ZM1551.0 846.0H1587.5V858.0H1551.0ZM1325.5 712.0H1483.0V723.5H1325.5ZM1471.0 712.0H1483.0V778.5H1471.0ZM1471.0 838.0H1483.0V970.5H1471.0ZM1471.0 846.0H1491.5V858.0H1471.0ZM1325.5 1126.5H1456.5V1138.5H1325.5ZM1518.0 1126.5H1610.5V1138.5H1518.0ZM1598.0 979.5H1611.0V1157.0H1598.0ZM1598.0 1225.0H1949.0V1239.0H1598.0ZM1598.0 1215.5H1610.5V1239.0H1598.0ZM1844.5 1225.0H1858.0V1280.5H1844.5ZM904.0 955.5H924.5V968.0H904.0ZM983.5 955.5H1062.5V968.0H983.5ZM902.5 955.5H916.0V1249.5H902.5ZM902.5 1237.0H1062.5V1249.5H902.5ZM699.6,1235L713.9,1230.5L747.5,1280L728.7,1280Z" fill="#606060"/><path d="M701.8 218.9H968.2V228.6H701.8ZM1100.8 218.9H1181.2V228.6H1100.8ZM1312.8 218.9H1393.2V228.6H1312.8ZM1525.8 218.9H1844.2V228.6H1525.8ZM701.8 218.9H711.7V285.6H701.8ZM701.8 417.9H711.7V611.2H701.8ZM701.8 788.8H711.7V1052.2H701.8ZM701.8 1184.8H711.7V1235.2H701.8ZM1163.8 218.9H1171.7V541.7H1163.8ZM1334.8 218.9H1342.2V541.7H1334.8ZM1535.8 218.9H1544.2V541.7H1535.8ZM782.8 534.8H1092.2V541.7H782.8ZM1069.3 534.8H1076.7V549.2H1069.3ZM712.8 534.8H719.2V541.7H712.8ZM1154.8 534.8H1179.2V541.7H1154.8ZM1242.8 534.8H1348.7V541.7H1242.8ZM1412.8 534.8H1544.2V541.7H1412.8ZM1069.3 613.8H1076.7V670.2H1069.3ZM1163.8 628.3H1170.7V670.2H1163.8ZM1858.8 533.3H1946.7V541.7H1858.8ZM1937.3 533.3H1946.7V551.7H1937.3ZM1937.3 705.8H1946.7V790.7H1937.3ZM1937.3 923.3H1946.7V1018.7H1937.3ZM1937.3 1150.3H1946.7V1237.2H1937.3ZM1578.3 761.3H1946.7V769.2H1578.3ZM1578.3 761.3H1585.2V778.2H1578.3ZM1578.3 839.3H1585.7V968.2H1578.3ZM1553.3 848.3H1585.2V855.7H1553.3ZM1327.8 714.3H1480.7V721.2H1327.8ZM1473.3 714.3H1480.7V776.2H1473.3ZM1473.3 840.3H1480.7V968.2H1473.3ZM1473.3 848.3H1489.2V855.7H1473.3ZM1327.8 1128.8H1454.2V1136.2H1327.8ZM1520.3 1128.8H1608.2V1136.2H1520.3ZM1600.3 981.8H1608.7V1154.7H1600.3ZM1600.3 1227.3H1946.7V1236.7H1600.3ZM1600.3 1217.8H1608.2V1236.7H1600.3ZM1846.8 1227.3H1855.7V1278.2H1846.8ZM906.3 957.8H922.2V965.7H906.3ZM985.8 957.8H1060.2V965.7H985.8ZM904.8 957.8H913.7V1247.2H904.8ZM904.8 1239.3H1060.2V1247.2H904.8ZM702.3,1237.5L712.8,1234.200L743.800,1280L731.500,1280Z" fill="url(#ph)"/>
<rect x="1845" y="217" width="13.500" height="41" fill="#9b9b9b" stroke="#606060" stroke-width="1.2"/><rect x="1845" y="487" width="13.500" height="57" fill="#9b9b9b" stroke="#606060" stroke-width="1.2"/>
<path d="M938.0 669.5H1204.5V688.5H938.0ZM1272.5 669.5H1329.0V688.5H1272.5ZM1059.0 669.5H1078.0V716.0H1059.0ZM1309.0 669.5H1329.0V1280.5H1309.0ZM1059.0 941.0H1078.0V1280.5H1059.0ZM1059.0 1257.5H1329.0V1280.5H1059.0ZM1309.0 965.0H1949.0V984.0H1309.0Z" fill="#5e5e5e"/><path d="M940.3 671.8H1202.2V686.2H940.3ZM1274.8 671.8H1326.7V686.2H1274.8ZM1061.3 671.8H1075.7V713.7H1061.3ZM1311.3 671.8H1326.7V1278.2H1311.3ZM1061.3 943.3H1075.7V1278.2H1061.3ZM1061.3 1259.8H1326.7V1278.2H1061.3ZM1311.3 967.3H1946.7V981.7H1311.3Z" fill="url(#pc)"/>
<path d="M1935.0 921.0H1949.0V1021.0H1935.0Z" fill="#606060"/><path d="M1937.3 923.3H1946.7V1018.7H1937.3Z" fill="url(#ph)"/>
<path d="M919.5 216.6H939.0V817.0H919.5ZM919.5 797.0H1078.0V817.0H919.5ZM1059.0 797.0H1078.0V872.5H1059.0Z" fill="#1e80f0"/><path d="M921.0 218.1H937.5V815.5H921.0ZM921.0 798.5H1076.5V815.5H921.0ZM1060.5 798.5H1076.5V871.0H1060.5Z" fill="url(#pb)"/>
<path d="M938.500 797.500V816M1059.500 816.500H1077" stroke="#1e78e0" stroke-width="1" opacity="0.7"/>
<polygon points="1238.6,708 1254.8,724.7 1223,724.7" fill="#555"/><polygon points="1097.4,907.5 1113.6,891.4 1113.6,923" fill="#555"/><polygon points="1290,1183 1273.8,1167.6 1273.8,1198.3" fill="#555"/>
<text transform="translate(1134,742) rotate(-90)" text-anchor="middle" font-size="15.500" fill="#707070" textLength="25.5" lengthAdjust="spacingAndGlyphs">1.58</text>
<text transform="translate(1134,973) rotate(-90)" text-anchor="middle" font-size="15.500" fill="#707070" textLength="25.5" lengthAdjust="spacingAndGlyphs">5.04</text>
<text transform="translate(1134,1203) rotate(-90)" text-anchor="middle" font-size="15.500" fill="#707070" textLength="25.5" lengthAdjust="spacingAndGlyphs">1.58</text>
<path d="M1001.500 1270L2041 208.500" stroke="#5ccb97" stroke-width="4.8" fill="none"/>
<polygon points="2048.700,200.600 2046,213.800 2040.500,209 2035,203.500" fill="#5ccb97"/>
<g transform="translate(1280.9,864.9) rotate(-44.8)"><rect x="-101.0" y="-39.75" width="202" height="79.5" fill="#fffff0" stroke="#f08080" stroke-width="1.2"/><text x="-96.0" y="-17.2" font-size="21.5" fill="#5a5a5a" xml:space="preserve">Mauerwerkswände:</text><text x="-96.0" y="7.6" font-size="21.5" fill="#5a5a5a" xml:space="preserve">aussen: KS 180 mm</text><text x="-96.0" y="32.4" font-size="21.5" fill="#5a5a5a" xml:space="preserve">innen:    KS 145mm</text></g>
<g transform="translate(1327,933.8) rotate(-44.8)"><rect x="-127.5" y="-15.7" width="255" height="31.4" fill="#b4f2b4" stroke="#57b98c" stroke-width="2.4"/><text x="-120.5" y="7.8" font-size="22" fill="#557055" xml:space="preserve">Decke H = 22 cm C25/30</text></g>
<g transform="translate(1369.4,978) rotate(-44.9)"><rect x="-158.5" y="-16.85" width="317" height="33.7" fill="#d4ffff" stroke="#9a9a9a" stroke-width="2.6"/><text x="-149.5" y="8.8" font-size="24.7" fill="#606060" xml:space="preserve">MW Innenwände mit DFL 50</text></g>
<rect x="1703" y="236" width="136.500" height="24.500" fill="#d4ffff" stroke="#a0a0a0" stroke-width="2.4"/><text x="1708" y="254" font-size="15.600" fill="#6e7c7c" textLength="127.500" lengthAdjust="spacingAndGlyphs">DEF Lager DFL100</text>
<rect x="1703" y="516.5" width="136.500" height="24.500" fill="#d4ffff" stroke="#a0a0a0" stroke-width="2.4"/><text x="1708" y="534.5" font-size="15.600" fill="#6e7c7c" textLength="127.500" lengthAdjust="spacingAndGlyphs">DEF Lager DFL100</text>
<rect x="1876" y="1255" width="1.5" height="1.5" fill="#888"/>
<g><polygon points="361.500,1203.500 368.500,1197 375.500,1203.500 368.500,1210.500" fill="#10f010"/>
<path d="M368.500 1197V1172" stroke="#1010ff" stroke-width="2"/><polygon points="368.500,1158 363,1173 374,1173" fill="#1010ff"/>
<path d="M375 1203.500H400" stroke="#ff1010" stroke-width="2"/><polygon points="414,1203.500 399,1198 399,1209" fill="#ff1010"/>
<g font-size="15.500" font-weight="bold" fill="#e8e000" stroke="#000" stroke-width="2.500" stroke-linejoin="round" paint-order="stroke"><text x="369.500" y="1151.500">Y</text><text x="422.500" y="1205">X</text><text x="364" y="1200.500">Z</text></g></g>
</svg></div>
<div class="abs" style="left:2141px;top:184px;width:339px;height:1px;background:#d0d0d0"></div>
<div class="abs" style="left:2141.500px;top:160px;width:57px;height:25px;background:#f8f8f8;border:1px solid #e2e2e2;border-bottom:none"></div>
<div class="abs" style="left:2198.500px;top:162px;width:119px;height:22px;border:1px solid #dedede;border-bottom:none;border-left:none"></div>
<div class="abs" style="left:2317.500px;top:162px;width:103px;height:22px;border:1px solid #dedede;border-bottom:none;border-left:none"></div>
<div class="t" style="left:2159px;top:163px;font-size:18px;letter-spacing:-0.5px">2D</div>
<div class="t" style="left:2215px;top:165px;font-size:17px;letter-spacing:-0.45px">Modifizieren</div>
<div class="t" style="left:2336px;top:165px;font-size:17px;letter-spacing:-0.4px">Hilfslinien</div>
<div class="abs" style="left:2157px;top:192px;width:31px;height:31px;border:2px solid #000;background:#6a6aa2;"></div><svg style="left:2157px;top:192px" width="31" height="31" viewBox="0 0 31 31" font-family="Liberation Sans, sans-serif"><g transform="translate(0,0)"><text x="15.500" y="20.500" font-size="13.500" text-anchor="middle" fill="#dcdcf0">2D</text></g></svg>
<div class="abs" style="left:2192px;top:192px;width:31px;height:31px;background:#6969a0;"></div><svg style="left:2192px;top:192px" width="31" height="31" viewBox="0 0 31 31" font-family="Liberation Sans, sans-serif"><g transform="translate(0,0)"><rect x="6.500" y="6.500" width="17.500" height="17.500" fill="#6c6ca4" stroke="#aeaed2" stroke-width="1"/><path d="M7 7h16.500L7 23.500z" fill="#b6b6d8"/></g></svg>
<div class="abs" style="left:2227px;top:192px;width:31px;height:31px;background:#6969a0;"></div><svg style="left:2227px;top:192px" width="31" height="31" viewBox="0 0 31 31" font-family="Liberation Sans, sans-serif"><g transform="translate(0,-3.3)"><path d="M8 22.500h10.500a4.200 4.200 0 0 0 0-8.400h-2.500" fill="none" stroke="#e4e4f2" stroke-width="1.500"/><circle cx="8" cy="22.500" r="1.400" fill="none" stroke="#d04040" stroke-width="0.900"/><circle cx="18.500" cy="22.500" r="1.400" fill="none" stroke="#d04040" stroke-width="0.900"/><circle cx="16" cy="14" r="1.400" fill="none" stroke="#d04040" stroke-width="0.900"/></g></svg>
<div class="abs" style="left:2262px;top:192px;width:31px;height:31px;background:#6969a0;"></div><svg style="left:2262px;top:192px" width="31" height="31" viewBox="0 0 31 31" font-family="Liberation Sans, sans-serif"><g transform="translate(0,-3.3)"><path d="M7.500 14.500h11l4.500 4-4.500 4h-11z" fill="#d0c8d0" stroke="#d8d8e0" stroke-width="0.600"/><circle cx="7.800" cy="14.500" r="1.400" fill="none" stroke="#c83030" stroke-width="0.900"/><circle cx="7.800" cy="22.300" r="1.400" fill="none" stroke="#c83030" stroke-width="0.900"/><circle cx="18.300" cy="14.500" r="1.400" fill="none" stroke="#c83030" stroke-width="0.900"/><circle cx="18.300" cy="22.300" r="1.400" fill="none" stroke="#c83030" stroke-width="0.900"/></g></svg>
<div class="abs" style="left:2297px;top:192px;width:31px;height:31px;background:#6969a0;"></div><svg style="left:2297px;top:192px" width="31" height="31" viewBox="0 0 31 31" font-family="Liberation Sans, sans-serif"><g transform="translate(0,-3.3)"><text x="15.500" y="25.500" font-size="22.500" font-weight="bold" font-family="Liberation Serif, serif" text-anchor="middle" fill="#e0e0ee">A</text></g></svg>
<div class="abs" style="left:2332px;top:192px;width:31px;height:31px;background:#6969a0;"></div><svg style="left:2332px;top:192px" width="31" height="31" viewBox="0 0 31 31" font-family="Liberation Sans, sans-serif"><g transform="translate(0,-3.3)"><path d="M7.500 18.500h16M7.500 14.500v8M23.500 14.500v8" stroke="#e4e4f2" stroke-width="1.100" fill="none"/><path d="M7.500 18.500l3-1.700v3.400zM23.500 18.500l-3-1.700v3.400z" fill="#e4e4f2"/></g></svg>
<div class="abs" style="left:2367px;top:192px;width:31px;height:31px;background:#6969a0;"></div><svg style="left:2367px;top:192px" width="31" height="31" viewBox="0 0 31 31" font-family="Liberation Sans, sans-serif"><g transform="translate(0,-3.3)"><path d="M12.500 12.500v12M15.500 12.500v12M18.500 12.500v12M9.500 12.500l11 11" stroke="#b0b0d0" stroke-width="1" fill="none"/></g></svg>
<div class="abs" style="left:2402px;top:192px;width:31px;height:31px;background:#5c5c96;"></div><svg style="left:2402px;top:192px" width="31" height="31" viewBox="0 0 31 31" font-family="Liberation Sans, sans-serif"><g transform="translate(0,-3.5)"><path d="M8.500 13v9h5v-9M17.500 13v9h5v-9" fill="none" stroke="#ececf8" stroke-width="1.900"/></g></svg>
<div class="box" style="left:2157px;top:237px;width:310px;height:1302px;border-color:#a0a0a0"></div>
<div class="tile" style="left:2164px;top:240px"><svg style="left:-1px;top:-1px" width="79" height="79" viewBox="0 0 79 79" font-family="Liberation Sans, sans-serif"><path d="M31 36h15M38.500 28.500v15" stroke="#7a0a0a" stroke-width="4.200"/><rect x="34" y="31.500" width="9" height="9" fill="#888" opacity="0.250"/></svg><div class="key" style="left:4px;top:2.5px;letter-spacing:0.7px;font-weight:normal;font-size:17px;letter-spacing:0;">K</div><svg style="left:2px;top:56px" width="13" height="19" viewBox="0 0 13 19"><path d="M3.200 1.500l3.600 3.500" stroke="#000" stroke-width="1" fill="none"/><rect x="1.700" y="5" width="9" height="12.500" rx="4.200" fill="#fff" stroke="#000" stroke-width="1.200"/><path d="M6.200 5v5.500h-4.500v-2a3.500 3.500 0 0 1 4.500-3.500z" fill="#000"/><path d="M1.700 10.500h9" stroke="#000" stroke-width="1"/></svg></div>
<div class="tlab" style="left:2149px;top:325.5px;letter-spacing:-0.55px">Knoten</div>
<div class="tile" style="left:2254px;top:240px"><svg style="left:-1px;top:-1px" width="79" height="79" viewBox="0 0 79 79" font-family="Liberation Sans, sans-serif"><circle cx="38.500" cy="37.500" r="20.300" fill="#ffff00" stroke="#888" stroke-width="0.800"/><text x="38.500" y="47.500" font-size="28" font-weight="bold" text-anchor="middle" fill="#000">1</text></svg><svg style="left:2px;top:56px" width="13" height="19" viewBox="0 0 13 19"><path d="M3.200 1.500l3.600 3.500" stroke="#000" stroke-width="1" fill="none"/><rect x="1.700" y="5" width="9" height="12.500" rx="4.200" fill="#fff" stroke="#000" stroke-width="1.200"/><path d="M6.200 5v5.500h-4.500v-2a3.500 3.500 0 0 1 4.500-3.500z" fill="#000"/><path d="M1.700 10.500h9" stroke="#000" stroke-width="1"/></svg></div>
<div class="tile" style="left:2344px;top:240px"><svg style="left:-1px;top:-1px" width="79" height="79" viewBox="0 0 79 79" font-family="Liberation Sans, sans-serif"><rect x="18.500" y="11.500" width="44.500" height="44" fill="#ff0000" stroke="#000" stroke-width="1.600"/><text x="40" y="44" font-size="28" font-weight="bold" text-anchor="middle" fill="#000">1</text></svg><svg style="left:2px;top:56px" width="13" height="19" viewBox="0 0 13 19"><path d="M3.200 1.500l3.600 3.500" stroke="#000" stroke-width="1" fill="none"/><rect x="1.700" y="5" width="9" height="12.500" rx="4.200" fill="#fff" stroke="#000" stroke-width="1.200"/><path d="M6.200 5v5.500h-4.500v-2a3.500 3.500 0 0 1 4.500-3.500z" fill="#000"/><path d="M1.700 10.500h9" stroke="#000" stroke-width="1"/></svg></div>
<div class="tile" style="left:2164px;top:350px"><svg style="left:-1px;top:-1px" width="79" height="79" viewBox="0 0 79 79" font-family="Liberation Sans, sans-serif"><path d="M26 39.500h28" stroke="#000" stroke-width="1.700"/><path d="M23 39.5H29M26 36.5V42.5" stroke="#7a0a0a" stroke-width="2"/><rect x="23.5" y="37.0" width="5" height="5" fill="#888" opacity="0.350"/><path d="M50.5 39.5H56.5M53.5 36.5V42.5" stroke="#7a0a0a" stroke-width="2"/><rect x="51.0" y="37.0" width="5" height="5" fill="#888" opacity="0.350"/></svg><div class="key" style="left:4px;top:4px;letter-spacing:0.7px;">L,<span style="color:#222;font-weight:normal;font-size:12.500px">(R)</span></div><svg style="left:2px;top:56px" width="13" height="19" viewBox="0 0 13 19"><path d="M3.200 1.500l3.600 3.500" stroke="#000" stroke-width="1" fill="none"/><rect x="1.700" y="5" width="9" height="12.500" rx="4.200" fill="#fff" stroke="#000" stroke-width="1.200"/><path d="M6.200 5v5.500h-4.500v-2a3.500 3.500 0 0 1 4.500-3.500z" fill="#000"/><path d="M1.700 10.500h9" stroke="#000" stroke-width="1"/></svg></div>
<div class="tlab" style="left:2149px;top:435.5px;letter-spacing:-0.55px">Linie</div>
<div class="tile" style="left:2254px;top:350px"><svg style="left:-1px;top:-1px" width="79" height="79" viewBox="0 0 79 79" font-family="Liberation Sans, sans-serif"><path d="M29 47.500h18l6-15" stroke="#000" stroke-width="1.700" fill="none"/><path d="M26 47.5H32M29 44.5V50.5" stroke="#7a0a0a" stroke-width="2"/><rect x="26.5" y="45.0" width="5" height="5" fill="#888" opacity="0.350"/><path d="M44 47.5H50M47 44.5V50.5" stroke="#7a0a0a" stroke-width="2"/><rect x="44.5" y="45.0" width="5" height="5" fill="#888" opacity="0.350"/><path d="M50 32.5H56M53 29.5V35.5" stroke="#7a0a0a" stroke-width="2"/><rect x="50.5" y="30.0" width="5" height="5" fill="#888" opacity="0.350"/></svg><div class="key" style="left:4px;top:4px;letter-spacing:0.7px;">L</div><svg style="left:2px;top:56px" width="13" height="19" viewBox="0 0 13 19"><path d="M3.200 1.500l3.600 3.500" stroke="#000" stroke-width="1" fill="none"/><rect x="1.700" y="5" width="9" height="12.500" rx="4.200" fill="#fff" stroke="#000" stroke-width="1.200"/><path d="M6.200 5v5.500h-4.500v-2a3.500 3.500 0 0 1 4.500-3.500z" fill="#000"/><path d="M1.700 10.500h9" stroke="#000" stroke-width="1"/></svg></div>
<div class="tlab" style="left:2239px;top:435.5px;letter-spacing:-0.55px">Linie</div>
<div class="tile" style="left:2344px;top:350px"><svg style="left:-1px;top:-1px" width="79" height="79" viewBox="0 0 79 79" font-family="Liberation Sans, sans-serif"><rect x="22" y="29.500" width="31" height="18.500" fill="#fff" stroke="#000" stroke-width="1.700"/><path d="M35.0 38.5H40.0M37.5 36.0V41.0" stroke="#a00000" stroke-width="1.300"/></svg><div class="key" style="left:4px;top:4px;letter-spacing:0.7px;">LR</div><svg style="left:2px;top:56px" width="13" height="19" viewBox="0 0 13 19"><path d="M3.200 1.500l3.600 3.500" stroke="#000" stroke-width="1" fill="none"/><rect x="1.700" y="5" width="9" height="12.500" rx="4.200" fill="#fff" stroke="#000" stroke-width="1.200"/><path d="M6.200 5v5.500h-4.500v-2a3.500 3.500 0 0 1 4.500-3.500z" fill="#000"/><path d="M1.700 10.500h9" stroke="#000" stroke-width="1"/></svg></div>
<div class="tlab" style="left:2329px;top:435.5px;letter-spacing:-0.55px">Rechteck</div>
<div class="tile" style="left:2164px;top:460px"><svg style="left:-1px;top:-1px" width="79" height="79" viewBox="0 0 79 79" font-family="Liberation Sans, sans-serif"><path d="M44.500 21.500l14 12.500-21.500 21.500-13.500-12z" fill="none" stroke="#000" stroke-width="1.900"/><path d="M42.0 19.0L47.0 24.0M47.0 19.0L42.0 24.0" stroke="#ff20ff" stroke-width="1.700"/><path d="M21.0 41.5L26.0 46.5M26.0 41.5L21.0 46.5" stroke="#ff20ff" stroke-width="1.700"/><path d="M34.5 53.5L39.5 58.5M39.5 53.5L34.5 58.5" stroke="#ff20ff" stroke-width="1.700"/><path d="M38.500 37l4 4M42.500 37l-4 4" stroke="#e00000" stroke-width="1.500"/></svg><div class="key" style="left:4px;top:4px;letter-spacing:0.7px;">LRH</div><svg style="left:2px;top:56px" width="13" height="19" viewBox="0 0 13 19"><path d="M3.200 1.500l3.600 3.500" stroke="#000" stroke-width="1" fill="none"/><rect x="1.700" y="5" width="9" height="12.500" rx="4.200" fill="#fff" stroke="#000" stroke-width="1.200"/><path d="M6.200 5v5.500h-4.500v-2a3.500 3.500 0 0 1 4.500-3.500z" fill="#000"/><path d="M1.700 10.500h9" stroke="#000" stroke-width="1"/></svg></div>
<div class="tlab" style="left:2149px;top:545.5px;letter-spacing:-0.55px">Rechteck</div>
<div class="tile" style="left:2254px;top:460px"><svg style="left:-1px;top:-1px" width="79" height="79" viewBox="0 0 79 79" font-family="Liberation Sans, sans-serif"><path d="M26.500 52c12 0 26-6 24.500-24" stroke="#000" stroke-width="1.800" fill="none"/><path d="M24.0 49.5L29.0 54.5M29.0 49.5L24.0 54.5" stroke="#ff20ff" stroke-width="1.700"/><path d="M44.0 44.5L49.0 49.5M49.0 44.5L44.0 49.5" stroke="#ff20ff" stroke-width="1.700"/><path d="M48.0 25.5L53.0 30.5M53.0 25.5L48.0 30.5" stroke="#ff20ff" stroke-width="1.700"/></svg><div class="key" style="left:4px;top:4px;letter-spacing:0.7px;">L,<span style="color:#222;font-weight:normal;font-size:13px">(L)</span>,A</div><svg style="left:2px;top:56px" width="13" height="19" viewBox="0 0 13 19"><path d="M3.200 1.500l3.600 3.500" stroke="#000" stroke-width="1" fill="none"/><rect x="1.700" y="5" width="9" height="12.500" rx="4.200" fill="#fff" stroke="#000" stroke-width="1.200"/><path d="M6.200 5v5.500h-4.500v-2a3.500 3.500 0 0 1 4.500-3.500z" fill="#000"/><path d="M1.700 10.500h9" stroke="#000" stroke-width="1"/></svg></div>
<div class="tlab" style="left:2239px;top:545.5px;letter-spacing:-0.55px">Radius 3P</div>
<div class="tile" style="left:2344px;top:460px"><svg style="left:-1px;top:-1px" width="79" height="79" viewBox="0 0 79 79" font-family="Liberation Sans, sans-serif"><path d="M33.500 26h10l7.500 7v9l-7.500 7h-10l-7.500-7v-9z" fill="none" stroke="#000" stroke-width="1.700"/><path d="M38.500 38.500l6-6.500" stroke="#c00000" stroke-width="1.300"/><path d="M36.0 38H41.0M38.5 35.5V40.5" stroke="#7a0a0a" stroke-width="1.300"/></svg><div class="key" style="left:4px;top:4px;letter-spacing:0.7px;">LC</div><svg style="left:2px;top:56px" width="13" height="19" viewBox="0 0 13 19"><path d="M3.200 1.500l3.600 3.500" stroke="#000" stroke-width="1" fill="none"/><rect x="1.700" y="5" width="9" height="12.500" rx="4.200" fill="#fff" stroke="#000" stroke-width="1.200"/><path d="M6.200 5v5.500h-4.500v-2a3.500 3.500 0 0 1 4.500-3.500z" fill="#000"/><path d="M1.700 10.500h9" stroke="#000" stroke-width="1"/></svg></div>
<div class="tlab" style="left:2329px;top:545.5px;letter-spacing:-0.55px">Kreis</div>
<div class="tile" style="left:2164px;top:570px"><svg style="left:-1px;top:-1px" width="79" height="79" viewBox="0 0 79 79" font-family="Liberation Sans, sans-serif"><path d="M39 24.500l17 12.500-6 18.500h-22l-6.500-18.500z" fill="#c8c0c8" stroke="#000" stroke-width="1.700"/><path d="M36.5 40.5H41.5M39 38.0V43.0" stroke="#a00000" stroke-width="1.300"/></svg><div class="key" style="left:4px;top:4px;letter-spacing:0.7px;">F</div><svg style="left:2px;top:56px" width="13" height="19" viewBox="0 0 13 19"><path d="M3.200 1.500l3.600 3.500" stroke="#000" stroke-width="1" fill="none"/><rect x="1.700" y="5" width="9" height="12.500" rx="4.200" fill="#fff" stroke="#000" stroke-width="1.200"/><path d="M6.200 5v5.500h-4.500v-2a3.500 3.500 0 0 1 4.500-3.500z" fill="#000"/><path d="M1.700 10.500h9" stroke="#000" stroke-width="1"/></svg></div>
<div class="tlab" style="left:2149px;top:655.5px;letter-spacing:-0.55px">Fläche</div>
<div class="tile" style="left:2254px;top:570px"><svg style="left:-1px;top:-1px" width="79" height="79" viewBox="0 0 79 79" font-family="Liberation Sans, sans-serif"><rect x="22" y="29.500" width="31" height="18.500" fill="#c8c0c8" stroke="#000" stroke-width="1.800"/><path d="M35.0 38.5H40.0M37.5 36.0V41.0" stroke="#a00000" stroke-width="1.300"/></svg><div class="key" style="left:4px;top:4px;letter-spacing:0.7px;">FR</div><svg style="left:2px;top:56px" width="13" height="19" viewBox="0 0 13 19"><path d="M3.200 1.500l3.600 3.500" stroke="#000" stroke-width="1" fill="none"/><rect x="1.700" y="5" width="9" height="12.500" rx="4.200" fill="#fff" stroke="#000" stroke-width="1.200"/><path d="M6.200 5v5.500h-4.500v-2a3.500 3.500 0 0 1 4.500-3.500z" fill="#000"/><path d="M1.700 10.500h9" stroke="#000" stroke-width="1"/></svg></div>
<div class="tlab" style="left:2239px;top:655.5px;letter-spacing:-0.55px">Rechteck</div>
<div class="tile" style="left:2344px;top:570px"><svg style="left:-1px;top:-1px" width="79" height="79" viewBox="0 0 79 79" font-family="Liberation Sans, sans-serif"><path d="M42 21.500l13 12-21.500 21.500-12.500-12.500z" fill="#c8c0c8" stroke="#000" stroke-width="1.800"/><path d="M39.5 18.5L44.5 23.5M44.5 18.5L39.5 23.5" stroke="#ff20ff" stroke-width="1.700"/><path d="M18.5 40.5L23.5 45.5M23.5 40.5L18.5 45.5" stroke="#ff20ff" stroke-width="1.700"/><path d="M31.0 53.0L36.0 58.0M36.0 53.0L31.0 58.0" stroke="#ff20ff" stroke-width="1.700"/><path d="M36 36l4 4M40 36l-4 4" stroke="#e00000" stroke-width="1.500"/></svg><div class="key" style="left:4px;top:2.5px;letter-spacing:0.7px;font-weight:normal;font-size:17px;letter-spacing:0;">FR3</div><svg style="left:2px;top:56px" width="13" height="19" viewBox="0 0 13 19"><path d="M3.200 1.500l3.600 3.500" stroke="#000" stroke-width="1" fill="none"/><rect x="1.700" y="5" width="9" height="12.500" rx="4.200" fill="#fff" stroke="#000" stroke-width="1.200"/><path d="M6.200 5v5.500h-4.500v-2a3.500 3.500 0 0 1 4.500-3.500z" fill="#000"/><path d="M1.700 10.500h9" stroke="#000" stroke-width="1"/></svg></div>
<div class="tlab" style="left:2329px;top:655.5px;letter-spacing:-0.55px">Rechteck</div>
<div class="tile" style="left:2164px;top:680px"><svg style="left:-1px;top:-1px" width="79" height="79" viewBox="0 0 79 79" font-family="Liberation Sans, sans-serif"><path d="M26.500 52.500L42.500 23.500c10 4 12 14 8 21-4 6-12 9-24 8z" fill="#c8c0c8" stroke="#000" stroke-width="1.700"/><path d="M24.0 50.0L29.0 55.0M29.0 50.0L24.0 55.0" stroke="#ff20ff" stroke-width="1.700"/><path d="M44.0 45.5L49.0 50.5M49.0 45.5L44.0 50.5" stroke="#ff20ff" stroke-width="1.700"/><path d="M40.0 21.0L45.0 26.0M45.0 21.0L40.0 26.0" stroke="#ff20ff" stroke-width="1.700"/></svg><div class="key" style="left:4px;top:4px;letter-spacing:0.7px;">F,<span style="color:#222;font-weight:normal;font-size:13px">(L)</span>,A</div><svg style="left:2px;top:56px" width="13" height="19" viewBox="0 0 13 19"><path d="M3.200 1.500l3.600 3.500" stroke="#000" stroke-width="1" fill="none"/><rect x="1.700" y="5" width="9" height="12.500" rx="4.200" fill="#fff" stroke="#000" stroke-width="1.200"/><path d="M6.200 5v5.500h-4.500v-2a3.500 3.500 0 0 1 4.500-3.500z" fill="#000"/><path d="M1.700 10.500h9" stroke="#000" stroke-width="1"/></svg></div>
<div class="tlab" style="left:2149px;top:765.5px;letter-spacing:-0.55px">Radius 3P</div>
<div class="tile" style="left:2254px;top:680px"><svg style="left:-1px;top:-1px" width="79" height="79" viewBox="0 0 79 79" font-family="Liberation Sans, sans-serif"><path d="M35 25.500h9l7.500 7.500v9l-7.500 7.500h-9l-7.500-7.500v-9z" fill="#c8c0c8" stroke="#000" stroke-width="1.700"/><path d="M39.500 37.500l6-6.500" stroke="#c00000" stroke-width="1.300"/><path d="M37.0 37.5H42.0M39.5 35.0V40.0" stroke="#7a0a0a" stroke-width="1.300"/></svg><div class="key" style="left:4px;top:4px;letter-spacing:0.7px;">FC</div><svg style="left:2px;top:56px" width="13" height="19" viewBox="0 0 13 19"><path d="M3.200 1.500l3.600 3.500" stroke="#000" stroke-width="1" fill="none"/><rect x="1.700" y="5" width="9" height="12.500" rx="4.200" fill="#fff" stroke="#000" stroke-width="1.200"/><path d="M6.200 5v5.500h-4.500v-2a3.500 3.500 0 0 1 4.500-3.500z" fill="#000"/><path d="M1.700 10.500h9" stroke="#000" stroke-width="1"/></svg></div>
<div class="tlab" style="left:2239px;top:765.5px;letter-spacing:-0.55px">Kreis</div>
<div class="tile" style="left:2164px;top:790px"><svg style="left:-1px;top:-1px" width="79" height="79" viewBox="0 0 79 79" font-family="Liberation Sans, sans-serif"><text x="38.500" y="41" font-size="24" text-anchor="middle" fill="#000">H</text><path d="M24 50.500h28M24.500 43.500v14M52.500 43.500v14M28.500 45v11M48.500 45v11" stroke="#000" stroke-width="1.500" fill="none"/><path d="M28.500 50.500l5-3v6zM48.500 50.500l-5-3v6z" fill="#000"/></svg><div class="key" style="left:4px;top:4px;letter-spacing:0.7px;">H</div><svg style="left:2px;top:56px" width="13" height="19" viewBox="0 0 13 19"><path d="M3.200 1.500l3.600 3.500" stroke="#000" stroke-width="1" fill="none"/><rect x="1.700" y="5" width="9" height="12.500" rx="4.200" fill="#fff" stroke="#000" stroke-width="1.200"/><path d="M6.200 5v5.500h-4.500v-2a3.500 3.500 0 0 1 4.500-3.500z" fill="#000"/><path d="M1.700 10.500h9" stroke="#000" stroke-width="1"/></svg></div>
<div class="tlab" style="left:2149px;top:875.5px;letter-spacing:-0.55px">Horiz.</div>
<div class="tile" style="left:2254px;top:790px"><svg style="left:-1px;top:-1px" width="79" height="79" viewBox="0 0 79 79" font-family="Liberation Sans, sans-serif"><path d="M25.500 22.500h14M25.500 50.500h14M32.500 22.500v28M27 26.500h11M27 46.500h11" stroke="#000" stroke-width="1.700" fill="none"/><path d="M32.500 26.500l-3 5h6zM32.500 46.500l-3-5h6z" fill="#000"/><text x="50" y="43.500" font-size="22" text-anchor="middle" fill="#000" font-weight="normal">V</text></svg><div class="key" style="left:4px;top:4px;letter-spacing:0.7px;">V</div><svg style="left:2px;top:56px" width="13" height="19" viewBox="0 0 13 19"><path d="M3.200 1.500l3.600 3.500" stroke="#000" stroke-width="1" fill="none"/><rect x="1.700" y="5" width="9" height="12.500" rx="4.200" fill="#fff" stroke="#000" stroke-width="1.200"/><path d="M6.200 5v5.500h-4.500v-2a3.500 3.500 0 0 1 4.500-3.500z" fill="#000"/><path d="M1.700 10.500h9" stroke="#000" stroke-width="1"/></svg></div>
<div class="tlab" style="left:2239px;top:875.5px;letter-spacing:-0.55px">Vert.</div>
<div class="tile" style="left:2344px;top:790px"><svg style="left:-1px;top:-1px" width="79" height="79" viewBox="0 0 79 79" font-family="Liberation Sans, sans-serif"><text x="32" y="35.500" font-size="22" text-anchor="middle" fill="#000">P</text><path d="M35 45l17-17M27.500 43l10 9M49 21l10 9" stroke="#000" stroke-width="1.600" fill="none"/><path d="M33 47l7-1.500-5.500-5.500zM54 26l-7 1.500 5.500 5.500z" fill="#000"/></svg><div class="key" style="left:4px;top:4px;letter-spacing:0.7px;">P</div><svg style="left:2px;top:56px" width="13" height="19" viewBox="0 0 13 19"><path d="M3.200 1.500l3.600 3.500" stroke="#000" stroke-width="1" fill="none"/><rect x="1.700" y="5" width="9" height="12.500" rx="4.200" fill="#fff" stroke="#000" stroke-width="1.200"/><path d="M6.200 5v5.500h-4.500v-2a3.500 3.500 0 0 1 4.500-3.500z" fill="#000"/><path d="M1.700 10.500h9" stroke="#000" stroke-width="1"/></svg></div>
<div class="tlab" style="left:2329px;top:875.5px;letter-spacing:-0.55px">Paral.</div>
<div class="tile" style="left:2164px;top:900px"><svg style="left:-1px;top:-1px" width="79" height="79" viewBox="0 0 79 79" font-family="Liberation Sans, sans-serif"><text x="36.500" y="52" font-size="40" font-family="Liberation Serif, serif" text-anchor="middle" fill="#000" stroke="#000" stroke-width="0.600">A</text></svg><div class="key" style="left:3px;top:4px;letter-spacing:0.7px;font-weight:normal;font-size:17px;letter-spacing:0;">T</div><svg style="left:2px;top:56px" width="13" height="19" viewBox="0 0 13 19"><path d="M3.200 1.500l3.600 3.500" stroke="#000" stroke-width="1" fill="none"/><rect x="1.700" y="5" width="9" height="12.500" rx="4.200" fill="#fff" stroke="#000" stroke-width="1.200"/><path d="M6.200 5v5.500h-4.500v-2a3.500 3.500 0 0 1 4.500-3.500z" fill="#000"/><path d="M1.700 10.500h9" stroke="#000" stroke-width="1"/></svg></div>
<div class="tlab" style="left:2149px;top:985.5px;letter-spacing:-0.55px">Text</div>
<div class="tile" style="left:2254px;top:900px"><svg style="left:-1px;top:-1px" width="79" height="79" viewBox="0 0 79 79" font-family="Liberation Sans, sans-serif"><path d="M18.500 36.500h34" stroke="#3d8bff" stroke-width="4.200"/><path d="M68.500 36.500l-19-10v20z" fill="#3d8bff"/></svg><svg style="left:2px;top:56px" width="13" height="19" viewBox="0 0 13 19"><path d="M3.200 1.500l3.600 3.500" stroke="#000" stroke-width="1" fill="none"/><rect x="1.700" y="5" width="9" height="12.500" rx="4.200" fill="#fff" stroke="#000" stroke-width="1.200"/><path d="M6.200 5v5.500h-4.500v-2a3.500 3.500 0 0 1 4.500-3.500z" fill="#000"/><path d="M1.700 10.500h9" stroke="#000" stroke-width="1"/></svg></div>
<div class="tlab" style="left:2239px;top:985.5px;letter-spacing:-0.55px">Pfeil</div>
<div class="tile" style="left:2164px;top:1010px"><svg style="left:-1px;top:-1px" width="79" height="79" viewBox="0 0 79 79" font-family="Liberation Sans, sans-serif"><defs><linearGradient id="sky" x1="0" y1="0" x2="1" y2="1"><stop offset="0" stop-color="#6f9fe8"/><stop offset="0.500" stop-color="#2f6ad8"/><stop offset="1" stop-color="#6fa0e8"/></linearGradient><linearGradient id="grs" x1="0" y1="0" x2="0" y2="1"><stop offset="0" stop-color="#7cc030"/><stop offset="0.600" stop-color="#3f8a1a"/><stop offset="1" stop-color="#2a5a12"/></linearGradient></defs>
<rect x="15.500" y="17.500" width="48" height="42" fill="url(#sky)"/><ellipse cx="45" cy="34" rx="8" ry="3" fill="#fff" opacity="0.800"/><ellipse cx="56" cy="22" rx="7" ry="3" fill="#fff" opacity="0.750"/><ellipse cx="24" cy="30" rx="5" ry="2" fill="#fff" opacity="0.700"/><ellipse cx="55" cy="38" rx="6" ry="2.500" fill="#fff" opacity="0.700"/><ellipse cx="33" cy="21" rx="6" ry="2" fill="#fff" opacity="0.500"/>
<path d="M15.500 43c10-5 20-5 30-2 8 1.500 13 1 18 0.500v18h-48z" fill="url(#grs)"/></svg></div>
<div class="tlab" style="left:2149px;top:1095.5px;letter-spacing:-0.55px">Bild</div>
<div class="btn" style="left:2457.500px;top:1551px;width:19px;height:18.500px;font-size:14px;line-height:17px;border-radius:3px">M</div>
<div class="dock" style="left:287px;top:1277px;width:1848px;height:28px"><div class="t" style="left:5px;letter-spacing:-0.05px">LV Ausmassprotokoll</div></div>
<svg style="left:2081.500px;top:1285px" width="14" height="14" viewBox="0 0 14 14"><path d="M4.500 3.500v-2h8v7h-2.500" fill="none" stroke="#333" stroke-width="1.700"/><rect x="1.500" y="5" width="8" height="7.500" fill="none" stroke="#333" stroke-width="1.700"/><path d="M1 5.300h9" stroke="#333" stroke-width="2.400"/></svg><svg style="left:2112.500px;top:1286px" width="12" height="12" viewBox="0 0 12 12"><path d="M1.500 1.500l9 9M10.500 1.500l-9 9" stroke="#333" stroke-width="2.200" fill="none"/></svg>
<div class="cb on" style="left:301px;top:1320px"><svg style="left:4px;top:5px" width="12" height="10" viewBox="0 0 12 10"><path d="M1 5l3.500 3.500L11 1.500" fill="none" stroke="#fff" stroke-width="1.600"/></svg></div>
<div class="t" style="left:329px;top:1323px;font-size:16.5px;color:#000;letter-spacing:-0.46px;">Nur sichtbare Elemente anzeigen</div>
<div class="cb off" style="left:572px;top:1320px"></div>
<div class="t" style="left:600px;top:1323px;font-size:16.5px;color:#000;letter-spacing:-0.75px;">GUID</div>
<div class="btn" style="left:652.500px;top:1314.500px;width:132px;height:32px"></div>
<svg style="left:659px;top:1324px" width="18" height="15" viewBox="0 0 18 15"><rect x="0" y="0" width="4.500" height="4" fill="#e8c020"/><rect x="6" y="0" width="4.500" height="4" fill="#20a020"/><rect x="12" y="0" width="4.500" height="4" fill="#e03030"/><rect x="0" y="5" width="4.500" height="4" fill="#3050e0"/><rect x="6" y="5" width="4.500" height="4" fill="#a030c0"/><rect x="12" y="5" width="4.500" height="4" fill="#30b0c0"/><rect x="0" y="10" width="4.500" height="4" fill="#f07020"/><rect x="6" y="10" width="4.500" height="4" fill="#101010"/><rect x="12" y="10" width="4.500" height="4" fill="#d040a0"/></svg>
<div class="t" style="left:690px;top:1323px;font-size:16.5px;color:#000;letter-spacing:-0.79px;">Farbwechsel</div>
<div class="abs" style="left:1137px;top:1320px;width:20px;height:20px;border-radius:10px;border:1px solid #5a5a5a;background:#fafafa"></div>
<div class="t" style="left:1165.5px;top:1323px;font-size:16.5px;color:#000;letter-spacing:-0.45px;">Positionen</div>
<div class="abs" style="left:1252px;top:1320px;width:20px;height:20px;border-radius:10px;background:#0a5fb8"></div><div class="abs" style="left:1258px;top:1326px;width:8px;height:8px;border-radius:4px;background:#fff"></div>
<div class="t" style="left:1280.5px;top:1323px;font-size:16.5px;color:#000;letter-spacing:-0.36px;">Bauteil Übersicht</div>
<div class="grp" style="left:1754.500px;top:1308px;width:162px;height:44px"></div>
<div class="btn" style="left:1769.5px;top:1314.500px;width:36px;height:32px;border-bottom-color:#bcbcbc"></div>
<div class="btn" style="left:1817.5px;top:1314.500px;width:36px;height:32px;border-bottom-color:#bcbcbc"></div>
<div class="btn" style="left:1925.5px;top:1314.500px;width:36px;height:32px;border-bottom-color:#bcbcbc"></div>
<svg style="left:1777px;top:1321px" width="22" height="20" viewBox="0 0 22 20"><path d="M1.500 1.500h19l-7.500 8.500v8l-4-2.500v-5.500z" fill="#333"/></svg>
<svg style="left:1825px;top:1321px" width="22" height="20" viewBox="0 0 22 20"><path d="M7.500 3.500h13M7.500 7.500h13M7.500 11.500h13M7.500 15.500h13" stroke="#333" stroke-width="1.300"/><path d="M3.500 2v16" stroke="#333" stroke-width="1.300" stroke-dasharray="2 1.500"/><path d="M1.500 7l2-2.500 2 2.500" fill="none" stroke="#333" stroke-width="1.100"/></svg>
<svg style="left:1872px;top:1320px" width="24" height="22" viewBox="0 0 24 22"><path d="M17.500 11.500v6.500a2 2 0 0 1-2 2h-11a2 2 0 0 1-2-2v-11a2 2 0 0 1 2-2h8" fill="none" stroke="#555" stroke-width="1.700"/><path d="M9 15l1-4 9.500-9.500 3 3-9.500 9.500z" fill="#555"/></svg>
<svg style="left:1932px;top:1319px" width="24" height="24" viewBox="0 0 24 24"><circle cx="12" cy="12" r="6.200" fill="none" stroke="#333" stroke-width="4.200"/><circle cx="12" cy="12" r="9.600" fill="none" stroke="#333" stroke-width="3.600" stroke-dasharray="3.800 3.740" transform="rotate(-14 12 12)"/></svg>
<div class="abs" style="left:1970px;top:1319px;width:83px;height:24px;background:#fff;border:1px solid #dadada;border-bottom-color:#b8b8b8;border-radius:3px"></div>
<div class="t" style="left:1974px;top:1323px;font-size:16.5px;color:#000;letter-spacing:-0.35px;">Ansicht</div>
<svg style="left:2032px;top:1327px" width="14" height="10" viewBox="0 0 14 10"><path d="M1.500 2l5.500 5.500L12.500 2" fill="none" stroke="#444" stroke-width="1.200"/></svg>
<div class="cb on" style="left:2060px;top:1320.500px;width:19.500px;height:19.500px"><svg style="left:4px;top:5px" width="12" height="10" viewBox="0 0 12 10"><path d="M1 5l3.500 3.500L11 1.500" fill="none" stroke="#fff" stroke-width="1.600"/></svg></div>
<svg style="left:2087px;top:1319px" width="23" height="23" viewBox="0 0 23 23"><path d="M4 10a7.600 7.600 0 0 1 13.500-3.500" fill="none" stroke="#000" stroke-width="2.800"/><path d="M20.500 1.500v8h-8z" fill="#000"/><path d="M19 13a7.600 7.600 0 0 1-13.500 3.500" fill="none" stroke="#000" stroke-width="2.800"/><path d="M2.500 21.500v-8h8z" fill="#000"/></svg>
<div class="box" style="left:301px;top:1355.500px;width:1820px;height:173.500px;border-color:#7a7f88"></div>
<div class="th" style="left:302px;width:79px;letter-spacing:-0.63px;">Farbe</div>
<div class="th" style="left:381px;width:180px;letter-spacing:0.0px;padding-left:18px;">Baut. Typ</div>
<div class="th" style="left:561px;width:180px;letter-spacing:0.16px;">Baut. Name</div>
<div class="th" style="left:741px;width:60.5px;letter-spacing:-0.25px;">Einheit</div>
<div class="th" style="left:801.5px;width:47.5px;letter-spacing:-0.17px;">Stk.</div>
<div class="th" style="left:849px;width:48px;letter-spacing:0.48px;">m3</div>
<div class="th" style="left:897px;width:71.5px;letter-spacing:0.48px;">m2</div>
<div class="th" style="left:968.5px;width:48.0px;letter-spacing:-1.0px;">m</div>
<div class="th" style="left:1016.5px;width:86.0px;letter-spacing:0.16px;">Höhe 2D</div>
<div class="th" style="left:1102.5px;width:71.0px;letter-spacing:0.25px;">Menge</div>
<div class="th" style="left:1173.5px;width:81.5px;letter-spacing:-0.17px;">Formula</div>
<div class="th" style="left:1255px;width:865.5px;letter-spacing:-0.15px;border-right:none;">Menge Position</div>
<svg style="left:386px;top:1364px" width="12" height="10" viewBox="0 0 12 10"><path d="M1 0.500h10l-5 8.500z" fill="#666"/></svg>
<div class="td" style="left:302px;top:1392.0px;width:79px;background:#fff;color:#000;letter-spacing:-0.35px;padding-left:24px;">256</div>
<div class="td" style="left:381px;top:1392.0px;width:180px;background:#fff;color:#9a9a9a;letter-spacing:-0.35px;">PDF</div>
<div class="td" style="left:561px;top:1392.0px;width:180px;background:#fff;color:#000;letter-spacing:-0.35px;">Neues Bauteil 365</div>
<div class="td" style="left:741px;top:1392.0px;width:60.5px;background:#fff;color:#000;letter-spacing:-0.35px;"></div>
<div class="td" style="left:801.5px;top:1392.0px;width:47.5px;background:#fdecc8;color:#000;letter-spacing:-0.35px;border-right-color:#d8d0c0;border-bottom-color:#d8d0c0;">1</div>
<div class="td" style="left:849px;top:1392.0px;width:48px;background:#fdecc8;color:#000;letter-spacing:-0.35px;border-right-color:#d8d0c0;border-bottom-color:#d8d0c0;"></div>
<div class="td" style="left:897px;top:1392.0px;width:71.5px;background:#fdecc8;color:#000;letter-spacing:-0.35px;border-right-color:#d8d0c0;border-bottom-color:#d8d0c0;">1252.05</div>
<div class="td" style="left:968.5px;top:1392.0px;width:48.0px;background:#fdecc8;color:#000;letter-spacing:-0.35px;border-right-color:#d8d0c0;border-bottom-color:#d8d0c0;"></div>
<div class="td" style="left:1016.5px;top:1392.0px;width:86.0px;background:#fdecc8;color:#000;letter-spacing:-0.35px;border-right-color:#d8d0c0;border-bottom-color:#d8d0c0;">0.00</div>
<div class="td" style="left:1102.5px;top:1392.0px;width:71.0px;background:#bdfbdd;color:#000;letter-spacing:-0.35px;border-right-color:transparent;border-bottom-color:#c8d8d0;">0.00</div>
<div class="td" style="left:1173.5px;top:1392.0px;width:81.5px;background:#f3a094;color:#000;letter-spacing:-0.35px;border-right-color:transparent;border-bottom-color:#c8d8d0;"></div>
<div class="td" style="left:1255px;top:1392.0px;width:865.5px;background:#bdfbdd;color:#000;letter-spacing:-0.35px;border-right-color:transparent;border-bottom-color:#c8d8d0;border-right:none;">0.00</div>
<div class="abs" style="left:305px;top:1402.0px;width:16px;height:16px;background:#fff;border:1px solid #000"></div>
<div class="td" style="left:302px;top:1427.7px;width:79px;background:#fff;color:#000;letter-spacing:-0.35px;padding-left:24px;">2</div>
<div class="td" style="left:381px;top:1427.7px;width:180px;background:#fff;color:#9a9a9a;letter-spacing:-0.35px;">Fläche</div>
<div class="td" style="left:561px;top:1427.7px;width:180px;background:#fff;color:#000;letter-spacing:-0.35px;">Neues Bauteil 366</div>
<div class="td" style="left:741px;top:1427.7px;width:60.5px;background:#fff;color:#000;letter-spacing:-0.35px;">m2</div>
<div class="td" style="left:801.5px;top:1427.7px;width:47.5px;background:#fdecc8;color:#000;letter-spacing:-0.35px;border-right-color:#d8d0c0;border-bottom-color:#d8d0c0;">3</div>
<div class="td" style="left:849px;top:1427.7px;width:48px;background:#fdecc8;color:#000;letter-spacing:-0.35px;border-right-color:#d8d0c0;border-bottom-color:#d8d0c0;"></div>
<div class="td" style="left:897px;top:1427.7px;width:71.5px;background:#fdecc8;color:#000;letter-spacing:-0.35px;border-right-color:#d8d0c0;border-bottom-color:#d8d0c0;">2.86</div>
<div class="td" style="left:968.5px;top:1427.7px;width:48.0px;background:#fdecc8;color:#000;letter-spacing:-0.35px;border-right-color:#d8d0c0;border-bottom-color:#d8d0c0;"></div>
<div class="td" style="left:1016.5px;top:1427.7px;width:86.0px;background:#fdecc8;color:#000;letter-spacing:-0.35px;border-right-color:#d8d0c0;border-bottom-color:#d8d0c0;">0.00</div>
<div class="td" style="left:1102.5px;top:1427.7px;width:71.0px;background:#bdfbdd;color:#000;letter-spacing:-0.35px;border-right-color:transparent;border-bottom-color:#c8d8d0;">2.86</div>
<div class="td" style="left:1173.5px;top:1427.7px;width:81.5px;background:#f3a094;color:#000;letter-spacing:-0.35px;border-right-color:transparent;border-bottom-color:#c8d8d0;"></div>
<div class="td" style="left:1255px;top:1427.7px;width:865.5px;background:#bdfbdd;color:#000;letter-spacing:-0.35px;border-right-color:transparent;border-bottom-color:#c8d8d0;border-right:none;">2.86</div>
<div class="abs" style="left:305px;top:1437.7px;width:16px;height:16px;background:#0a84ff;border:1px solid #003a80"></div>
<div class="btn" style="left:302px;top:1537.500px;width:109.500px;height:31px"></div>
<div class="t" style="left:315.5px;top:1545px;font-size:16.5px;color:#000;letter-spacing:-0.29px;">Exportieren</div>
<div class="grp" style="left:855.500px;top:1531.500px;width:270px;height:42.500px"></div>
<div class="btn" style="left:870px;top:1537.500px;width:109px;height:31px"></div>
<div class="t" style="left:877.5px;top:1545px;font-size:16.5px;color:#000;letter-spacing:-0.55px;">Pset erstellen</div>
<div class="t" style="left:990px;top:1545px;font-size:16.5px;color:#f01010;letter-spacing:-0.5px;">Pset aktualisieren</div>
<div class="grp" style="left:1567.500px;top:1531px;width:439.500px;height:42.500px"></div>
<div class="t" style="left:1581px;top:1545px;font-size:16.5px;color:#000;letter-spacing:-0.68px;">Gesamtmenge</div>
<div class="abs" style="left:1924px;top:1540px;width:68px;height:26px;border:1px solid #e6e6e6;border-radius:2px"></div>
<div class="t" style="left:1926px;top:1545px;font-size:16.5px;color:#9a9a9a;letter-spacing:-0.45px;">2.86</div>
<div class="btn" style="left:2010.500px;top:1537.500px;width:109px;height:31px"></div>
<div class="t" style="left:2023px;top:1545px;font-size:16.5px;color:#000;letter-spacing:-0.5px;">Create table</div>
</body>
</html>
